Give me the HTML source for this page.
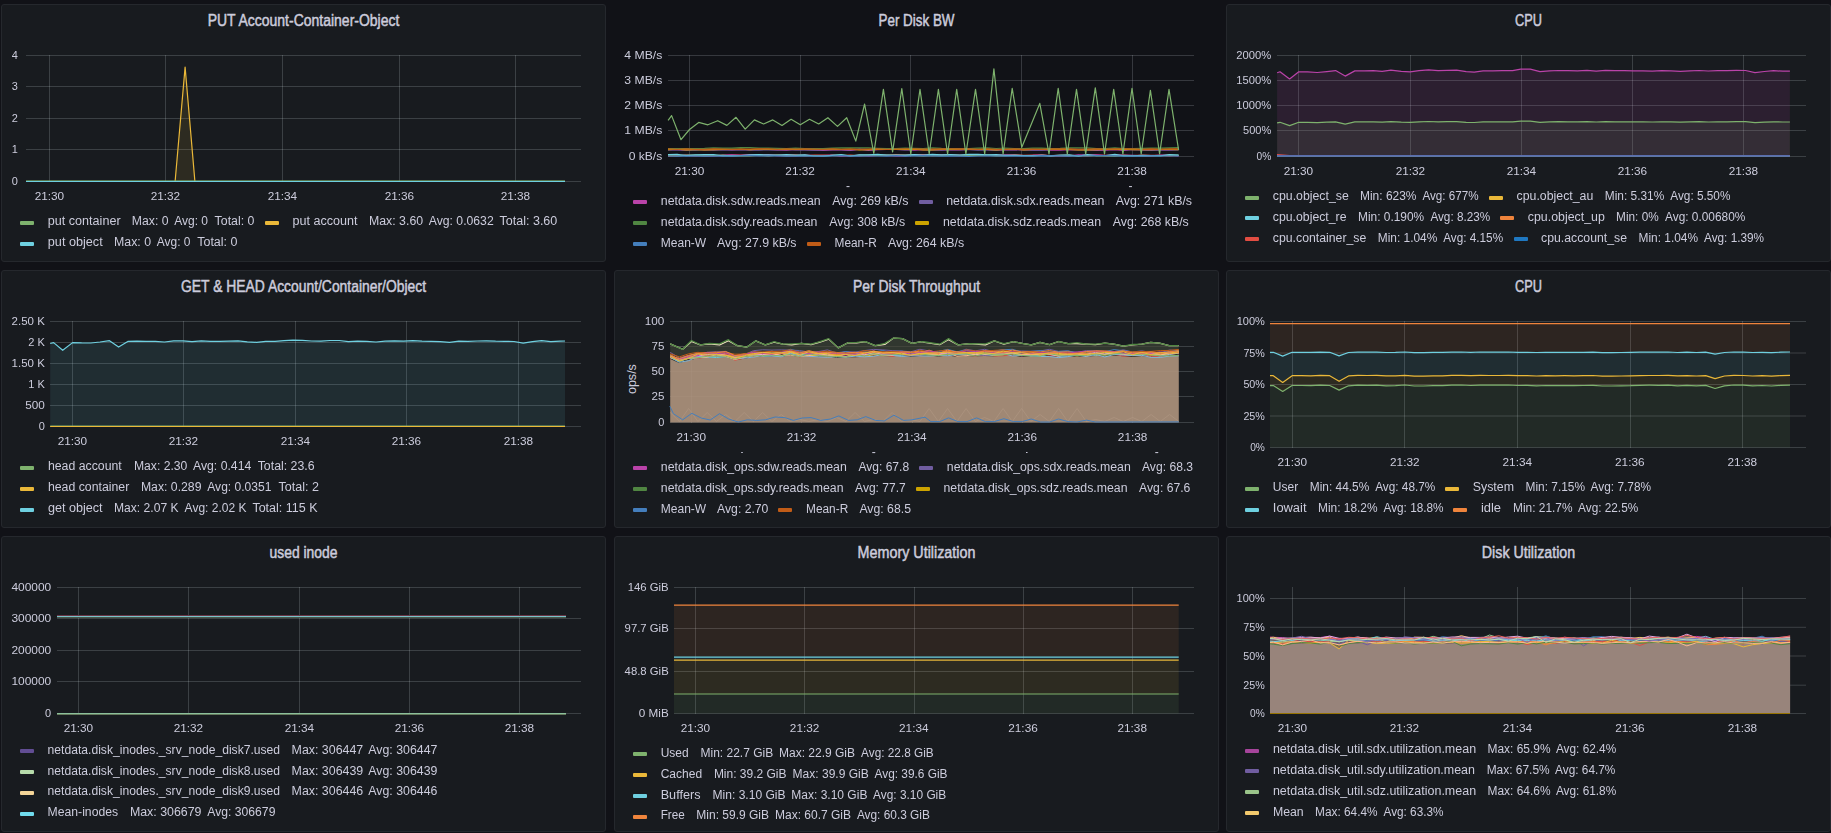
<!DOCTYPE html><html><head><meta charset="utf-8"><style>html,body{margin:0;padding:0;background:#111217;width:1831px;height:833px;overflow:hidden}svg{display:block}text{font-family:"Liberation Sans",sans-serif}</style></head><body>
<svg width="1831" height="833" viewBox="0 0 1831 833">
<rect width="1831" height="833" fill="#111217"/>
<rect x="1.5" y="4.5" width="604" height="257" rx="2.5" fill="#181b1f" stroke="#25282d" stroke-width="1"/>
<g stroke="rgba(240,250,255,0.17)">
<line x1="26.0" y1="55.5" x2="581.0" y2="55.5" stroke-width="1"/>
<line x1="26.0" y1="86.5" x2="581.0" y2="86.5" stroke-width="1"/>
<line x1="26.0" y1="118.5" x2="581.0" y2="118.5" stroke-width="1"/>
<line x1="26.0" y1="149.5" x2="581.0" y2="149.5" stroke-width="1"/>
<line x1="26.0" y1="181.5" x2="581.0" y2="181.5" stroke-width="1"/>
<line x1="49.5" y1="55.0" x2="49.5" y2="182.0" stroke-width="1"/>
<line x1="165.5" y1="55.0" x2="165.5" y2="182.0" stroke-width="1"/>
<line x1="282.5" y1="55.0" x2="282.5" y2="182.0" stroke-width="1"/>
<line x1="399.5" y1="55.0" x2="399.5" y2="182.0" stroke-width="1"/>
<line x1="515.5" y1="55.0" x2="515.5" y2="182.0" stroke-width="1"/>
</g>
<polygon points="175.1,181.5 175.1,181.5 185.1,67.1 194.9,181.5 194.9,181.5" fill="#EAB839" fill-opacity="0.1"/>
<polyline points="175.1,181.5 185.1,67.1 194.9,181.5" fill="none" stroke="#EAB839" stroke-width="1.2" stroke-linejoin="round"/>
<polyline points="26,180.5 565,180.5" stroke="#7EB26D" stroke-width="1" opacity="0.6" fill="none"/>
<polyline points="26.0,181.5 175.1,181.5" fill="none" stroke="#EAB839" stroke-width="1.2" stroke-linejoin="round"/>
<polyline points="194.9,181.5 565.0,181.5" fill="none" stroke="#EAB839" stroke-width="1.2" stroke-linejoin="round"/>
<polyline points="26.0,181.5 565.0,181.5" fill="none" stroke="#6ED0E0" stroke-width="1.2" stroke-linejoin="round"/>
<rect x="20" y="221" width="14" height="4" rx="1" fill="#7EB26D"/>
<rect x="265" y="221" width="14" height="4" rx="1" fill="#EAB839"/>
<rect x="20" y="242" width="14" height="4" rx="1" fill="#6ED0E0"/>
<g stroke="rgba(240,250,255,0.17)">
<line x1="668.0" y1="55.5" x2="1194.0" y2="55.5" stroke-width="1"/>
<line x1="668.0" y1="80.5" x2="1194.0" y2="80.5" stroke-width="1"/>
<line x1="668.0" y1="105.5" x2="1194.0" y2="105.5" stroke-width="1"/>
<line x1="668.0" y1="130.5" x2="1194.0" y2="130.5" stroke-width="1"/>
<line x1="668.0" y1="156.5" x2="1194.0" y2="156.5" stroke-width="1"/>
<line x1="689.5" y1="55.0" x2="689.5" y2="157.0" stroke-width="1"/>
<line x1="800.5" y1="55.0" x2="800.5" y2="157.0" stroke-width="1"/>
<line x1="910.5" y1="55.0" x2="910.5" y2="157.0" stroke-width="1"/>
<line x1="1021.5" y1="55.0" x2="1021.5" y2="157.0" stroke-width="1"/>
<line x1="1132.5" y1="55.0" x2="1132.5" y2="157.0" stroke-width="1"/>
</g>
<polyline points="668.0,149.7 677.1,149.6 686.2,150.1 695.4,149.5 704.5,149.9 713.6,149.8 722.7,149.5 731.8,149.9 740.9,149.4 750.1,149.8 759.2,149.5 768.3,149.5 777.4,149.8 786.5,150.2 795.6,149.5 804.8,149.6 813.9,150.0 823.0,150.3 832.1,150.0 841.2,149.8 850.4,150.4 859.5,149.4 868.6,150.3 877.7,149.7 886.8,149.5 895.9,149.5 905.1,149.7 914.2,150.2 923.3,149.6 932.4,150.0 941.5,150.0 950.7,149.8 959.8,149.9 968.9,149.5 978.0,149.5 987.1,149.6 996.2,150.1 1005.4,149.8 1014.5,149.7 1023.6,150.0 1032.7,149.9 1041.8,149.7 1050.9,150.2 1060.1,150.1 1069.2,149.6 1078.3,150.0 1087.4,149.9 1096.5,150.3 1105.7,150.1 1114.8,149.7 1123.9,150.4 1133.0,149.5 1142.1,149.8 1151.2,150.2 1160.4,149.6 1169.5,149.9 1178.6,149.4" fill="none" stroke="#BA43A9" stroke-width="1.2" stroke-linejoin="round"/>
<polyline points="668.0,149.9 677.1,150.0 686.2,149.8 695.4,150.1 704.5,149.5 713.6,149.9 722.7,149.8 731.8,149.8 740.9,149.7 750.1,150.0 759.2,150.1 768.3,149.7 777.4,149.9 786.5,149.3 795.6,149.9 804.8,149.8 813.9,150.2 823.0,150.0 832.1,149.5 841.2,149.6 850.4,149.9 859.5,149.2 868.6,149.7 877.7,149.4 886.8,149.3 895.9,149.3 905.1,150.0 914.2,149.3 923.3,149.4 932.4,149.6 941.5,150.1 950.7,149.3 959.8,149.6 968.9,149.7 978.0,150.1 987.1,150.0 996.2,150.1 1005.4,149.5 1014.5,149.6 1023.6,149.6 1032.7,150.1 1041.8,150.2 1050.9,149.4 1060.1,149.4 1069.2,149.4 1078.3,149.4 1087.4,149.7 1096.5,149.8 1105.7,149.5 1114.8,149.2 1123.9,149.6 1133.0,149.6 1142.1,149.8 1151.2,150.2 1160.4,149.9 1169.5,149.7 1178.6,149.8" fill="none" stroke="#705DA0" stroke-width="1.2" stroke-linejoin="round"/>
<polyline points="668.0,149.6 677.1,149.1 686.2,149.8 695.4,149.7 704.5,149.8 713.6,149.7 722.7,149.4 731.8,149.4 740.9,149.2 750.1,149.6 759.2,149.1 768.3,149.2 777.4,149.3 786.5,149.2 795.6,149.4 804.8,149.1 813.9,149.1 823.0,149.2 832.1,149.2 841.2,149.4 850.4,149.1 859.5,149.8 868.6,149.6 877.7,149.2 886.8,149.3 895.9,149.4 905.1,149.4 914.2,149.2 923.3,149.8 932.4,149.9 941.5,149.5 950.7,149.5 959.8,149.2 968.9,149.2 978.0,149.4 987.1,149.3 996.2,149.8 1005.4,149.2 1014.5,149.1 1023.6,149.9 1032.7,149.5 1041.8,149.2 1050.9,149.5 1060.1,149.1 1069.2,149.5 1078.3,149.9 1087.4,149.8 1096.5,149.7 1105.7,149.3 1114.8,149.4 1123.9,149.2 1133.0,149.7 1142.1,149.5 1151.2,149.7 1160.4,149.4 1169.5,149.3 1178.6,149.7" fill="none" stroke="#CCA300" stroke-width="1.2" stroke-linejoin="round"/>
<polyline points="668.0,148.7 677.1,148.6 686.2,148.5 695.4,148.5 704.5,148.4 713.6,147.9 722.7,148.2 731.8,148.1 740.9,147.7 750.1,147.7 759.2,148.0 768.3,148.0 777.4,148.4 786.5,148.7 795.6,148.1 804.8,148.6 813.9,148.7 823.0,148.7 832.1,148.1 841.2,147.9 850.4,147.9 859.5,147.9 868.6,147.9 877.7,148.3 886.8,148.6 895.9,148.5 905.1,148.2 914.2,148.4 923.3,148.5 932.4,147.8 941.5,148.4 950.7,148.6 959.8,148.5 968.9,148.5 978.0,148.2 987.1,147.9 996.2,148.5 1005.4,148.0 1014.5,148.5 1023.6,148.7 1032.7,148.1 1041.8,148.1 1050.9,148.6 1060.1,148.4 1069.2,147.9 1078.3,147.8 1087.4,147.9 1096.5,148.6 1105.7,148.5 1114.8,147.8 1123.9,148.5 1133.0,148.7 1142.1,148.4 1151.2,148.1 1160.4,148.2 1169.5,147.8 1178.6,147.7" fill="none" stroke="#508642" stroke-width="1.2" stroke-linejoin="round"/>
<polyline points="668.0,155.9 677.1,155.5 686.2,155.3 695.4,155.8 704.5,155.2 713.6,155.7 722.7,155.7 731.8,155.0 740.9,155.0 750.1,155.1 759.2,155.0 768.3,155.4 777.4,155.0 786.5,155.2 795.6,154.9 804.8,155.8 813.9,155.1 823.0,155.2 832.1,155.4 841.2,155.8 850.4,155.2 859.5,155.8 868.6,155.3 877.7,155.3 886.8,155.3 895.9,154.7 905.1,155.2 914.2,154.9 923.3,154.7 932.4,155.7 941.5,154.9 950.7,155.3 959.8,155.6 968.9,155.4 978.0,155.1 987.1,155.3 996.2,155.4 1005.4,155.6 1014.5,154.8 1023.6,155.4 1032.7,155.0 1041.8,155.0 1050.9,155.6 1060.1,155.3 1069.2,155.4 1078.3,155.6 1087.4,155.8 1096.5,155.2 1105.7,155.4 1114.8,155.3 1123.9,155.3 1133.0,155.5 1142.1,155.2 1151.2,155.3 1160.4,155.3 1169.5,155.8 1178.6,155.5" fill="none" stroke="#E24D42" stroke-width="1.2" stroke-linejoin="round"/>
<polyline points="668.0,155.9 677.1,155.9 686.2,155.1 695.4,155.5 704.5,155.9 713.6,155.8 722.7,155.0 731.8,154.9 740.9,155.3 750.1,154.9 759.2,155.1 768.3,154.9 777.4,155.6 786.5,155.7 795.6,155.9 804.8,155.0 813.9,155.7 823.0,155.6 832.1,155.0 841.2,155.9 850.4,156.0 859.5,155.1 868.6,155.9 877.7,155.3 886.8,155.4 895.9,156.0 905.1,155.8 914.2,155.0 923.3,155.3 932.4,155.4 941.5,155.2 950.7,155.0 959.8,155.2 968.9,155.7 978.0,154.8 987.1,155.5 996.2,155.3 1005.4,154.8 1014.5,155.2 1023.6,155.5 1032.7,155.4 1041.8,154.9 1050.9,156.0 1060.1,155.7 1069.2,156.0 1078.3,154.9 1087.4,155.1 1096.5,154.8 1105.7,155.7 1114.8,155.1 1123.9,155.0 1133.0,155.3 1142.1,155.9 1151.2,155.8 1160.4,155.1 1169.5,155.0 1178.6,155.9" fill="none" stroke="#BA43A9" stroke-width="1.2" stroke-linejoin="round"/>
<polyline points="668.0,155.7 677.1,155.8 686.2,155.2 695.4,155.2 704.5,155.8 713.6,155.5 722.7,155.2 731.8,156.0 740.9,155.7 750.1,155.9 759.2,155.2 768.3,156.0 777.4,155.2 786.5,156.0 795.6,155.6 804.8,155.4 813.9,155.7 823.0,156.0 832.1,155.4 841.2,155.2 850.4,155.6 859.5,155.3 868.6,155.2 877.7,155.3 886.8,155.2 895.9,155.3 905.1,155.4 914.2,155.4 923.3,155.9 932.4,155.4 941.5,155.6 950.7,155.3 959.8,155.4 968.9,155.1 978.0,155.4 987.1,155.1 996.2,155.8 1005.4,155.7 1014.5,155.3 1023.6,155.6 1032.7,156.0 1041.8,155.2 1050.9,155.9 1060.1,155.5 1069.2,155.6 1078.3,155.9 1087.4,155.5 1096.5,155.6 1105.7,155.8 1114.8,156.1 1123.9,155.4 1133.0,155.9 1142.1,155.8 1151.2,155.7 1160.4,155.5 1169.5,155.4 1178.6,155.2" fill="none" stroke="#7EB26D" stroke-width="1.2" stroke-linejoin="round"/>
<polyline points="668.0,154.5 677.1,154.4 686.2,155.6 695.4,154.8 704.5,154.6 713.6,154.5 722.7,155.8 731.8,155.9 740.9,155.5 750.1,154.8 759.2,154.7 768.3,154.8 777.4,155.1 786.5,154.6 795.6,155.1 804.8,154.8 813.9,156.0 823.0,156.1 832.1,155.3 841.2,154.7 850.4,156.0 859.5,154.9 868.6,154.9 877.7,154.3 886.8,155.0 895.9,155.2 905.1,155.2 914.2,154.7 923.3,155.2 932.4,154.3 941.5,154.8 950.7,154.5 959.8,155.0 968.9,154.4 978.0,154.3 987.1,154.8 996.2,154.7 1005.4,155.4 1014.5,155.3 1023.6,155.7 1032.7,155.5 1041.8,155.6 1050.9,155.9 1060.1,155.0 1069.2,154.9 1078.3,156.1 1087.4,154.6 1096.5,155.6 1105.7,155.5 1114.8,154.4 1123.9,155.8 1133.0,155.9 1142.1,155.4 1151.2,155.6 1160.4,155.8 1169.5,154.6 1178.6,155.2" fill="none" stroke="#6ED0E0" stroke-width="1.2" stroke-linejoin="round"/>
<polyline points="668.0,156.0 677.1,156.2 686.2,156.2 695.4,156.2 704.5,156.1 713.6,156.2 722.7,156.1 731.8,156.1 740.9,155.8 750.1,155.7 759.2,155.8 768.3,155.9 777.4,155.8 786.5,156.2 795.6,156.0 804.8,156.1 813.9,156.1 823.0,156.1 832.1,156.0 841.2,155.7 850.4,156.2 859.5,156.1 868.6,156.0 877.7,156.0 886.8,156.1 895.9,155.7 905.1,156.1 914.2,155.9 923.3,155.7 932.4,155.9 941.5,156.1 950.7,155.8 959.8,156.1 968.9,156.3 978.0,156.0 987.1,155.9 996.2,156.0 1005.4,156.1 1014.5,156.2 1023.6,156.1 1032.7,156.1 1041.8,155.7 1050.9,155.8 1060.1,155.9 1069.2,156.1 1078.3,155.9 1087.4,156.0 1096.5,155.7 1105.7,155.7 1114.8,155.9 1123.9,156.1 1133.0,156.1 1142.1,156.1 1151.2,155.9 1160.4,156.0 1169.5,156.0 1178.6,156.0" fill="none" stroke="#447EBC" stroke-width="1.2" stroke-linejoin="round"/>
<polyline points="668.0,148.9 677.1,149.3 686.2,148.9 695.4,149.4 704.5,149.4 713.6,148.8 722.7,149.1 731.8,149.3 740.9,149.4 750.1,149.1 759.2,149.0 768.3,148.9 777.4,149.4 786.5,148.9 795.6,149.1 804.8,148.9 813.9,149.1 823.0,149.4 832.1,148.9 841.2,149.3 850.4,149.1 859.5,149.3 868.6,149.2 877.7,148.9 886.8,149.3 895.9,149.1 905.1,148.8 914.2,148.8 923.3,149.1 932.4,149.1 941.5,149.0 950.7,148.9 959.8,149.0 968.9,149.0 978.0,149.3 987.1,148.8 996.2,149.3 1005.4,149.3 1014.5,148.9 1023.6,149.4 1032.7,149.2 1041.8,149.3 1050.9,149.0 1060.1,149.0 1069.2,149.0 1078.3,149.4 1087.4,149.2 1096.5,149.0 1105.7,149.1 1114.8,149.0 1123.9,148.8 1133.0,148.9 1142.1,149.3 1151.2,149.0 1160.4,149.4 1169.5,148.9 1178.6,149.0" fill="none" stroke="#C15C17" stroke-width="1.3" stroke-linejoin="round"/>
<polyline points="668.1,120.3 671.6,115.6 681.0,139.7 689.5,129.5 698.7,122.4 707.9,124.8 717.7,120.7 726.9,125.4 736.0,117.3 745.2,129.1 754.4,119.9 763.6,124.0 772.8,119.9 782.0,125.4 791.1,119.3 800.3,124.8 809.5,119.3 818.7,124.0 827.9,117.7 837.5,126.4 846.7,117.7 855.8,141.1 864.6,104.0 873.8,153.4 883.4,89.3 892.6,151.9 901.8,88.7 910.8,154.0 920.0,89.3 929.2,154.0 938.4,89.3 947.6,154.0 956.7,89.3 965.9,154.0 975.5,89.3 984.7,154.0 993.9,68.9 1003.1,154.0 1012.2,88.3 1021.8,147.3 1039.8,103.4 1049.0,154.0 1058.2,88.3 1067.3,154.0 1076.5,89.3 1085.7,154.0 1095.3,87.9 1104.5,154.0 1113.7,89.3 1122.9,154.0 1132.0,88.3 1141.2,154.0 1150.4,90.3 1159.6,154.0 1169.0,89.3 1178.6,149.9" fill="none" stroke="#7EB26D" stroke-width="1.2" stroke-linejoin="round"/>
<rect x="633" y="200" width="14" height="4" rx="1" fill="#BA43A9"/>
<rect x="919" y="200" width="14" height="4" rx="1" fill="#705DA0"/>
<rect x="633" y="221" width="14" height="4" rx="1" fill="#508642"/>
<rect x="915" y="221" width="14" height="4" rx="1" fill="#CCA300"/>
<rect x="633" y="242" width="14" height="4" rx="1" fill="#447EBC"/>
<rect x="807" y="242" width="14" height="4" rx="1" fill="#C15C17"/>
<rect x="1226.5" y="4.5" width="604" height="257" rx="2.5" fill="#181b1f" stroke="#25282d" stroke-width="1"/>
<g stroke="rgba(240,250,255,0.17)">
<line x1="1277.0" y1="55.5" x2="1806.0" y2="55.5" stroke-width="1"/>
<line x1="1277.0" y1="80.5" x2="1806.0" y2="80.5" stroke-width="1"/>
<line x1="1277.0" y1="105.5" x2="1806.0" y2="105.5" stroke-width="1"/>
<line x1="1277.0" y1="130.5" x2="1806.0" y2="130.5" stroke-width="1"/>
<line x1="1277.0" y1="156.5" x2="1806.0" y2="156.5" stroke-width="1"/>
<line x1="1298.5" y1="55.0" x2="1298.5" y2="157.0" stroke-width="1"/>
<line x1="1410.5" y1="55.0" x2="1410.5" y2="157.0" stroke-width="1"/>
<line x1="1521.5" y1="55.0" x2="1521.5" y2="157.0" stroke-width="1"/>
<line x1="1632.5" y1="55.0" x2="1632.5" y2="157.0" stroke-width="1"/>
<line x1="1743.5" y1="55.0" x2="1743.5" y2="157.0" stroke-width="1"/>
</g>
<polygon points="1277.1,156.5 1277.1,72.8 1280.0,71.8 1289.6,79.0 1298.8,71.8 1307.6,71.8 1317.2,72.5 1326.8,71.6 1335.6,70.6 1345.2,76.1 1354.8,70.9 1364.4,70.9 1373.2,70.6 1382.1,71.3 1390.9,70.2 1401.3,71.3 1410.1,71.8 1419.0,70.6 1428.6,69.9 1438.2,70.6 1447.0,70.3 1456.6,70.2 1466.2,71.7 1474.3,72.1 1483.1,70.9 1492.7,70.9 1502.3,70.6 1512.6,70.6 1520.7,69.1 1530.3,69.1 1540.0,71.7 1549.4,70.8 1558.8,70.5 1568.0,70.7 1577.5,70.9 1587.0,70.4 1596.2,71.1 1605.5,70.3 1615.0,70.6 1624.3,70.7 1633.6,70.9 1643.0,70.8 1652.3,71.2 1661.6,70.6 1671.0,70.9 1680.4,71.3 1689.7,70.9 1699.0,70.5 1708.3,71.0 1717.6,70.7 1727.0,70.6 1736.3,70.3 1745.6,70.5 1755.0,72.6 1764.3,71.5 1773.6,70.7 1782.9,71.2 1789.9,71.1 1789.9,156.5" fill="#BA43A9" fill-opacity="0.12"/>
<polyline points="1277.1,72.8 1280.0,71.8 1289.6,79.0 1298.8,71.8 1307.6,71.8 1317.2,72.5 1326.8,71.6 1335.6,70.6 1345.2,76.1 1354.8,70.9 1364.4,70.9 1373.2,70.6 1382.1,71.3 1390.9,70.2 1401.3,71.3 1410.1,71.8 1419.0,70.6 1428.6,69.9 1438.2,70.6 1447.0,70.3 1456.6,70.2 1466.2,71.7 1474.3,72.1 1483.1,70.9 1492.7,70.9 1502.3,70.6 1512.6,70.6 1520.7,69.1 1530.3,69.1 1540.0,71.7 1549.4,70.8 1558.8,70.5 1568.0,70.7 1577.5,70.9 1587.0,70.4 1596.2,71.1 1605.5,70.3 1615.0,70.6 1624.3,70.7 1633.6,70.9 1643.0,70.8 1652.3,71.2 1661.6,70.6 1671.0,70.9 1680.4,71.3 1689.7,70.9 1699.0,70.5 1708.3,71.0 1717.6,70.7 1727.0,70.6 1736.3,70.3 1745.6,70.5 1755.0,72.6 1764.3,71.5 1773.6,70.7 1782.9,71.2 1789.9,71.1" fill="none" stroke="#BA43A9" stroke-width="1.2" stroke-linejoin="round"/>
<polygon points="1277.1,156.5 1277.1,122.8 1280.0,122.3 1289.6,125.6 1298.8,122.3 1307.6,122.3 1317.2,122.6 1326.8,122.2 1335.6,121.8 1345.2,124.2 1354.8,121.9 1364.4,121.9 1373.2,121.8 1382.1,122.1 1390.9,121.6 1401.3,122.1 1410.1,122.3 1419.0,121.8 1428.6,121.5 1438.2,121.8 1447.0,121.6 1456.6,121.6 1466.2,122.3 1474.3,122.5 1483.1,121.9 1492.7,121.9 1502.3,121.8 1512.6,121.8 1520.7,121.1 1530.3,121.1 1540.0,122.3 1549.4,121.9 1558.8,121.7 1568.0,121.8 1577.5,121.9 1587.0,121.7 1596.2,122.0 1605.5,121.6 1615.0,121.8 1624.3,121.8 1633.6,121.9 1643.0,121.9 1652.3,122.0 1661.6,121.8 1671.0,121.9 1680.4,122.1 1689.7,121.9 1699.0,121.7 1708.3,122.0 1717.6,121.8 1727.0,121.8 1736.3,121.6 1745.6,121.7 1755.0,122.7 1764.3,122.2 1773.6,121.8 1782.9,122.0 1789.9,122.0 1789.9,156.5" fill="#7EB26D" fill-opacity="0.1"/>
<polyline points="1277.1,122.8 1280.0,122.3 1289.6,125.6 1298.8,122.3 1307.6,122.3 1317.2,122.6 1326.8,122.2 1335.6,121.8 1345.2,124.2 1354.8,121.9 1364.4,121.9 1373.2,121.8 1382.1,122.1 1390.9,121.6 1401.3,122.1 1410.1,122.3 1419.0,121.8 1428.6,121.5 1438.2,121.8 1447.0,121.6 1456.6,121.6 1466.2,122.3 1474.3,122.5 1483.1,121.9 1492.7,121.9 1502.3,121.8 1512.6,121.8 1520.7,121.1 1530.3,121.1 1540.0,122.3 1549.4,121.9 1558.8,121.7 1568.0,121.8 1577.5,121.9 1587.0,121.7 1596.2,122.0 1605.5,121.6 1615.0,121.8 1624.3,121.8 1633.6,121.9 1643.0,121.9 1652.3,122.0 1661.6,121.8 1671.0,121.9 1680.4,122.1 1689.7,121.9 1699.0,121.7 1708.3,122.0 1717.6,121.8 1727.0,121.8 1736.3,121.6 1745.6,121.7 1755.0,122.7 1764.3,122.2 1773.6,121.8 1782.9,122.0 1789.9,122.0" fill="none" stroke="#7EB26D" stroke-width="1.2" stroke-linejoin="round"/>
<polyline points="1277.0,154.7 1280.0,154.9 1289.6,155.7 1298.8,155.9 1789.9,155.9" fill="none" stroke="#E24D42" stroke-width="1.2" stroke-linejoin="round"/>
<polyline points="1277.0,155.9 1789.9,155.9" fill="none" stroke="#EF843C" stroke-width="1.2" stroke-linejoin="round"/>
<polyline points="1277.0,155.7 1789.9,155.7" fill="none" stroke="#705DA0" stroke-width="1.2" stroke-linejoin="round"/>
<polyline points="1277.0,156.1 1789.9,156.1" fill="none" stroke="#447EBC" stroke-width="1.2" stroke-linejoin="round"/>
<rect x="1245" y="196" width="14" height="4" rx="1" fill="#7EB26D"/>
<rect x="1489" y="196" width="14" height="4" rx="1" fill="#EAB839"/>
<rect x="1245" y="216" width="14" height="4" rx="1" fill="#6ED0E0"/>
<rect x="1500" y="216" width="14" height="4" rx="1" fill="#EF843C"/>
<rect x="1245" y="237" width="14" height="4" rx="1" fill="#E24D42"/>
<rect x="1514" y="237" width="14" height="4" rx="1" fill="#1F78C1"/>
<rect x="1.5" y="270.5" width="604" height="257" rx="2.5" fill="#181b1f" stroke="#25282d" stroke-width="1"/>
<g stroke="rgba(240,250,255,0.17)">
<line x1="50.0" y1="321.5" x2="581.0" y2="321.5" stroke-width="1"/>
<line x1="50.0" y1="342.5" x2="581.0" y2="342.5" stroke-width="1"/>
<line x1="50.0" y1="363.5" x2="581.0" y2="363.5" stroke-width="1"/>
<line x1="50.0" y1="384.5" x2="581.0" y2="384.5" stroke-width="1"/>
<line x1="50.0" y1="405.5" x2="581.0" y2="405.5" stroke-width="1"/>
<line x1="50.0" y1="426.5" x2="581.0" y2="426.5" stroke-width="1"/>
<line x1="72.5" y1="321.0" x2="72.5" y2="427.0" stroke-width="1"/>
<line x1="183.5" y1="321.0" x2="183.5" y2="427.0" stroke-width="1"/>
<line x1="295.5" y1="321.0" x2="295.5" y2="427.0" stroke-width="1"/>
<line x1="406.5" y1="321.0" x2="406.5" y2="427.0" stroke-width="1"/>
<line x1="518.5" y1="321.0" x2="518.5" y2="427.0" stroke-width="1"/>
</g>
<polygon points="50.2,426.5 50.2,343.5 53.6,342.6 62.7,350.3 72.6,342.6 81.6,342.9 90.8,343.0 100.0,342.0 109.5,340.7 118.6,347.1 127.8,341.4 137.0,341.2 146.0,341.4 155.3,341.3 164.5,342.0 173.7,340.8 183.0,340.9 192.0,341.6 201.3,340.9 210.5,341.3 219.7,341.3 229.0,341.1 238.0,340.9 247.3,341.9 256.5,342.3 265.7,341.4 275.0,341.3 284.0,340.6 293.0,340.2 302.4,340.4 311.6,341.0 320.8,341.1 330.0,340.5 339.2,340.5 348.4,341.6 357.6,341.1 366.8,341.4 376.0,342.0 385.2,341.1 394.4,340.9 403.6,341.1 412.8,340.6 422.0,341.1 431.2,341.3 440.4,341.7 449.6,342.4 458.8,341.2 468.0,341.4 477.2,341.0 486.4,340.8 495.6,341.2 504.8,341.3 514.0,341.5 523.2,343.2 532.4,341.6 541.6,340.7 550.8,341.6 560.0,341.2 565.0,341.0 565.0,426.5" fill="#6ED0E0" fill-opacity="0.1"/>
<polyline points="50.2,343.5 53.6,342.6 62.7,350.3 72.6,342.6 81.6,342.9 90.8,343.0 100.0,342.0 109.5,340.7 118.6,347.1 127.8,341.4 137.0,341.2 146.0,341.4 155.3,341.3 164.5,342.0 173.7,340.8 183.0,340.9 192.0,341.6 201.3,340.9 210.5,341.3 219.7,341.3 229.0,341.1 238.0,340.9 247.3,341.9 256.5,342.3 265.7,341.4 275.0,341.3 284.0,340.6 293.0,340.2 302.4,340.4 311.6,341.0 320.8,341.1 330.0,340.5 339.2,340.5 348.4,341.6 357.6,341.1 366.8,341.4 376.0,342.0 385.2,341.1 394.4,340.9 403.6,341.1 412.8,340.6 422.0,341.1 431.2,341.3 440.4,341.7 449.6,342.4 458.8,341.2 468.0,341.4 477.2,341.0 486.4,340.8 495.6,341.2 504.8,341.3 514.0,341.5 523.2,343.2 532.4,341.6 541.6,340.7 550.8,341.6 560.0,341.2 565.0,341.0" fill="none" stroke="#6ED0E0" stroke-width="1.2" stroke-linejoin="round"/>
<polyline points="50.2,426.2 565.0,426.2" fill="none" stroke="#7EB26D" stroke-width="1.2" stroke-linejoin="round"/>
<polyline points="50.2,426.5 565.0,426.5" fill="none" stroke="#EAB839" stroke-width="1.2" stroke-linejoin="round"/>
<rect x="20" y="466" width="14" height="4" rx="1" fill="#7EB26D"/>
<rect x="20" y="487" width="14" height="4" rx="1" fill="#EAB839"/>
<rect x="20" y="508" width="14" height="4" rx="1" fill="#6ED0E0"/>
<rect x="614.5" y="270.5" width="604" height="257" rx="2.5" fill="#181b1f" stroke="#25282d" stroke-width="1"/>
<g stroke="rgba(240,250,255,0.17)">
<line x1="670.0" y1="321.5" x2="1194.0" y2="321.5" stroke-width="1"/>
<line x1="670.0" y1="346.5" x2="1194.0" y2="346.5" stroke-width="1"/>
<line x1="670.0" y1="371.5" x2="1194.0" y2="371.5" stroke-width="1"/>
<line x1="670.0" y1="396.5" x2="1194.0" y2="396.5" stroke-width="1"/>
<line x1="670.0" y1="422.5" x2="1194.0" y2="422.5" stroke-width="1"/>
<line x1="691.5" y1="321.0" x2="691.5" y2="423.0" stroke-width="1"/>
<line x1="801.5" y1="321.0" x2="801.5" y2="423.0" stroke-width="1"/>
<line x1="912.5" y1="321.0" x2="912.5" y2="423.0" stroke-width="1"/>
<line x1="1022.5" y1="321.0" x2="1022.5" y2="423.0" stroke-width="1"/>
<line x1="1132.5" y1="321.0" x2="1132.5" y2="423.0" stroke-width="1"/>
</g>
<text x="0" y="0" font-size="12" fill="#ccccdc" text-anchor="middle" transform="translate(636,379.1) rotate(-90)" textLength="30" lengthAdjust="spacingAndGlyphs">ops/s</text>
<polygon points="670.2,343.9 682.7,349.3 691.5,340.5 700.4,344.9 709.2,343.4 719.6,343.9 728.4,339.7 737.3,345.6 746.9,347.1 755.7,340.9 765.3,344.9 774.1,341.7 783.0,344.2 791.8,343.9 801.4,343.4 811.0,344.2 819.9,341.7 828.7,338.6 838.3,347.9 847.9,342.7 856.7,342.4 865.6,341.7 875.2,345.6 884.8,343.4 893.6,338.0 902.5,338.6 912.0,343.4 921.6,341.7 925.0,342.0 939.7,344.2 948.6,338.6 958.2,344.9 969.2,343.7 985.5,343.9 994.3,340.9 1003.9,343.7 1013.5,341.7 1022.3,343.4 1031.2,344.9 1040.0,342.4 1049.6,344.6 1058.5,341.5 1068.1,343.7 1076.9,342.7 1086.5,344.2 1095.4,344.2 1104.9,343.1 1113.8,344.2 1123.4,346.1 1132.2,344.5 1141.8,344.2 1150.7,342.4 1159.5,343.1 1169.1,345.6 1178.7,345.6 1178.8,355.6 1169.6,355.9 1160.3,356.8 1151.1,357.1 1141.8,356.1 1132.6,357.0 1123.3,356.2 1114.1,355.5 1104.8,356.3 1095.6,356.0 1086.3,356.4 1077.1,356.5 1067.8,356.8 1058.6,357.0 1049.3,355.9 1040.1,356.8 1030.8,355.9 1021.6,356.9 1012.3,355.5 1003.1,355.7 993.9,356.2 984.6,355.9 975.4,356.2 966.1,356.0 956.9,356.7 947.6,355.4 938.4,356.6 929.1,355.5 919.9,355.9 910.6,356.9 901.4,355.6 892.1,356.3 882.9,356.1 873.6,355.7 864.4,356.7 855.1,357.2 845.9,357.3 836.7,358.0 827.4,356.2 818.2,356.4 808.9,356.2 799.7,356.9 790.4,355.5 781.2,356.6 771.9,356.6 762.7,356.3 753.4,357.0 744.2,358.8 734.9,360.0 725.7,356.9 716.4,357.6 707.2,357.4 697.9,358.2 688.7,360.3 679.4,362.9 670.2,359.1" fill="#31372f" fill-opacity="1"/>
<polygon points="670.2,422.5 670.2,359.1 679.4,362.9 688.7,360.3 697.9,358.2 707.2,357.4 716.4,357.6 725.7,356.9 734.9,360.0 744.2,358.8 753.4,357.0 762.7,356.3 771.9,356.6 781.2,356.6 790.4,355.5 799.7,356.9 808.9,356.2 818.2,356.4 827.4,356.2 836.7,358.0 845.9,357.3 855.1,357.2 864.4,356.7 873.6,355.7 882.9,356.1 892.1,356.3 901.4,355.6 910.6,356.9 919.9,355.9 929.1,355.5 938.4,356.6 947.6,355.4 956.9,356.7 966.1,356.0 975.4,356.2 984.6,355.9 993.9,356.2 1003.1,355.7 1012.3,355.5 1021.6,356.9 1030.8,355.9 1040.1,356.8 1049.3,355.9 1058.6,357.0 1067.8,356.8 1077.1,356.5 1086.3,356.4 1095.6,356.0 1104.8,356.3 1114.1,355.5 1123.3,356.2 1132.6,357.0 1141.8,356.1 1151.1,357.1 1160.3,356.8 1169.6,355.9 1178.8,355.6 1178.8,422.5" fill="#a08874"/>
<line x1="670.2" y1="346.5" x2="1178.8" y2="346.5" stroke="#b8a492" stroke-width="1" opacity="0.12"/>
<line x1="670.2" y1="371.5" x2="1178.8" y2="371.5" stroke="#b8a492" stroke-width="1" opacity="0.12"/>
<line x1="670.2" y1="396.5" x2="1178.8" y2="396.5" stroke="#b8a492" stroke-width="1" opacity="0.12"/>
<line x1="691.5" y1="359.5" x2="691.5" y2="422.5" stroke="#b09a88" stroke-width="1" opacity="0.2"/>
<line x1="801.5" y1="359.5" x2="801.5" y2="422.5" stroke="#b09a88" stroke-width="1" opacity="0.2"/>
<line x1="912.5" y1="359.5" x2="912.5" y2="422.5" stroke="#b09a88" stroke-width="1" opacity="0.2"/>
<line x1="1022.5" y1="359.5" x2="1022.5" y2="422.5" stroke="#b09a88" stroke-width="1" opacity="0.2"/>
<line x1="1132.5" y1="359.5" x2="1132.5" y2="422.5" stroke="#b09a88" stroke-width="1" opacity="0.2"/>
<polyline points="670.2,412.5 679.4,421.5 688.7,408.5 697.9,421.5 707.2,412.5 716.4,421.5 725.7,414.5 734.9,421.5 744.2,412.5 753.4,421.5 762.7,412.5 771.9,421.5 781.2,414.5 790.4,421.5 799.7,419.5 808.9,421.5 818.2,419.5 827.4,421.5 836.7,417.5 845.9,421.5 855.1,412.5 864.4,421.5 873.6,419.5 882.9,421.5 892.1,412.5 901.4,421.5 910.6,419.5 919.9,421.5 929.1,408.5 938.4,421.5 947.6,408.5 956.9,421.5 966.1,408.5 975.4,421.5 984.6,417.5 993.9,421.5 1003.1,408.5 1012.3,421.5 1021.6,408.5 1030.8,421.5 1040.1,414.5 1049.3,421.5 1058.6,408.5 1067.8,421.5 1077.1,408.5 1086.3,421.5 1095.6,419.5 1104.8,421.5 1114.1,417.5 1123.3,421.5 1132.6,417.5 1141.8,421.5 1151.1,414.5 1160.3,421.5 1169.6,414.5 1178.8,421.5" fill="none" stroke="#b09884" stroke-width="1" opacity="0.6"/>
<polyline points="670.2,357.1 679.4,360.1 688.7,356.9 697.9,354.7 707.2,356.1 716.4,356.2 725.7,354.3 734.9,358.4 744.2,357.1 753.4,356.0 762.7,355.5 771.9,354.1 781.2,355.9 790.4,354.7 799.7,354.9 808.9,355.1 818.2,354.1 827.4,353.6 836.7,355.0 845.9,356.1 855.1,354.0 864.4,353.2 873.6,354.4 882.9,354.7 892.1,354.0 901.4,354.4 910.6,353.3 919.9,353.0 929.1,352.7 938.4,354.1 947.6,352.2 956.9,353.2 966.1,353.3 975.4,355.1 984.6,355.1 993.9,354.7 1003.1,353.4 1012.3,352.5 1021.6,356.0 1030.8,353.7 1040.1,355.3 1049.3,352.3 1058.6,354.0 1067.8,355.6 1077.1,355.1 1086.3,355.3 1095.6,354.1 1104.8,353.8 1114.1,353.5 1123.3,355.0 1132.6,354.2 1141.8,354.0 1151.1,354.2 1160.3,355.4 1169.6,352.1 1178.8,353.9" fill="none" stroke="#BA43A9" stroke-width="1" stroke-linejoin="round"/>
<polyline points="670.2,352.4 679.4,357.9 688.7,355.5 697.9,354.0 707.2,352.4 716.4,351.6 725.7,351.4 734.9,356.1 744.2,354.7 753.4,350.7 762.7,349.8 771.9,350.1 781.2,349.9 790.4,350.1 799.7,350.5 808.9,352.0 818.2,351.6 827.4,349.9 836.7,352.8 845.9,351.5 855.1,352.0 864.4,350.6 873.6,349.4 882.9,349.9 892.1,350.6 901.4,350.9 910.6,351.8 919.9,349.3 929.1,350.9 938.4,352.4 947.6,351.0 956.9,352.3 966.1,349.2 975.4,350.8 984.6,349.3 993.9,351.7 1003.1,349.5 1012.3,350.9 1021.6,350.9 1030.8,351.2 1040.1,351.0 1049.3,349.3 1058.6,351.4 1067.8,351.0 1077.1,352.4 1086.3,350.5 1095.6,350.7 1104.8,351.1 1114.1,351.6 1123.3,349.8 1132.6,352.0 1141.8,350.8 1151.1,352.5 1160.3,352.9 1169.6,350.0 1178.8,350.9" fill="none" stroke="#705DA0" stroke-width="1" stroke-linejoin="round"/>
<polyline points="670.2,356.1 679.4,358.5 688.7,358.1 697.9,356.5 707.2,353.8 716.4,354.0 725.7,355.3 734.9,355.7 744.2,354.4 753.4,352.6 762.7,354.1 771.9,354.2 781.2,353.3 790.4,352.8 799.7,352.3 808.9,353.5 818.2,353.1 827.4,353.2 836.7,354.5 845.9,353.8 855.1,353.3 864.4,352.3 873.6,352.4 882.9,352.2 892.1,353.8 901.4,353.4 910.6,354.4 919.9,352.6 929.1,351.6 938.4,353.1 947.6,352.2 956.9,354.0 966.1,354.2 975.4,351.8 984.6,352.7 993.9,353.0 1003.1,353.2 1012.3,353.6 1021.6,354.6 1030.8,353.2 1040.1,354.5 1049.3,353.3 1058.6,355.0 1067.8,354.3 1077.1,353.9 1086.3,352.5 1095.6,354.1 1104.8,352.8 1114.1,352.7 1123.3,354.1 1132.6,355.2 1141.8,354.4 1151.1,352.4 1160.3,353.1 1169.6,352.2 1178.8,352.1" fill="none" stroke="#CCA300" stroke-width="1" stroke-linejoin="round"/>
<polyline points="670.2,358.0 679.4,360.4 688.7,358.5 697.9,358.3 707.2,356.9 716.4,356.3 725.7,354.5 734.9,360.2 744.2,358.1 753.4,354.9 762.7,354.6 771.9,355.8 781.2,355.9 790.4,353.6 799.7,357.0 808.9,354.4 818.2,354.4 827.4,356.1 836.7,355.7 845.9,356.6 855.1,355.1 864.4,355.8 873.6,353.8 882.9,354.5 892.1,356.4 901.4,354.3 910.6,355.5 919.9,355.0 929.1,353.6 938.4,354.4 947.6,353.8 956.9,354.8 966.1,353.8 975.4,356.3 984.6,353.3 993.9,355.9 1003.1,355.8 1012.3,354.9 1021.6,354.2 1030.8,354.7 1040.1,354.2 1049.3,355.0 1058.6,356.4 1067.8,354.8 1077.1,353.8 1086.3,355.3 1095.6,353.5 1104.8,354.5 1114.1,354.1 1123.3,356.2 1132.6,355.4 1141.8,353.8 1151.1,356.7 1160.3,356.6 1169.6,354.7 1178.8,353.0" fill="none" stroke="#E24D42" stroke-width="1" stroke-linejoin="round"/>
<polyline points="670.2,357.3 679.4,361.6 688.7,358.0 697.9,357.7 707.2,357.0 716.4,357.5 725.7,356.6 734.9,357.2 744.2,357.6 753.4,354.3 762.7,356.1 771.9,355.9 781.2,356.0 790.4,353.1 799.7,354.1 808.9,355.7 818.2,355.2 827.4,355.2 836.7,356.4 845.9,356.7 855.1,355.3 864.4,354.6 873.6,353.8 882.9,354.1 892.1,355.2 901.4,355.3 910.6,354.2 919.9,353.2 929.1,354.1 938.4,355.7 947.6,353.0 956.9,354.6 966.1,353.2 975.4,353.4 984.6,354.4 993.9,355.3 1003.1,354.7 1012.3,353.0 1021.6,354.2 1030.8,355.8 1040.1,355.5 1049.3,354.2 1058.6,356.2 1067.8,356.1 1077.1,355.1 1086.3,353.7 1095.6,355.5 1104.8,354.0 1114.1,352.7 1123.3,354.3 1132.6,355.6 1141.8,355.0 1151.1,354.6 1160.3,356.0 1169.6,354.4 1178.8,353.1" fill="none" stroke="#6ED0E0" stroke-width="1" stroke-linejoin="round"/>
<polyline points="670.2,355.2 679.4,359.4 688.7,356.1 697.9,352.6 707.2,353.4 716.4,354.1 725.7,352.3 734.9,356.5 744.2,355.4 753.4,351.9 762.7,352.9 771.9,353.2 781.2,352.8 790.4,349.3 799.7,351.7 808.9,351.8 818.2,351.9 827.4,352.3 836.7,353.7 845.9,351.5 855.1,353.8 864.4,352.1 873.6,352.1 882.9,350.5 892.1,353.0 901.4,351.0 910.6,353.0 919.9,351.9 929.1,351.9 938.4,351.4 947.6,349.4 956.9,351.7 966.1,350.3 975.4,351.5 984.6,352.1 993.9,351.0 1003.1,349.8 1012.3,349.3 1021.6,351.9 1030.8,351.4 1040.1,350.6 1049.3,351.7 1058.6,351.4 1067.8,350.9 1077.1,353.0 1086.3,351.7 1095.6,352.4 1104.8,351.6 1114.1,349.6 1123.3,350.7 1132.6,352.0 1141.8,351.8 1151.1,353.1 1160.3,352.8 1169.6,351.5 1178.8,350.1" fill="none" stroke="#447EBC" stroke-width="1" stroke-linejoin="round"/>
<polyline points="670.2,356.0 679.4,360.2 688.7,357.0 697.9,355.7 707.2,354.6 716.4,353.6 725.7,355.2 734.9,357.6 744.2,357.0 753.4,355.1 762.7,354.4 771.9,355.4 781.2,353.6 790.4,352.5 799.7,352.7 808.9,354.0 818.2,354.0 827.4,353.8 836.7,356.8 845.9,353.7 855.1,353.8 864.4,354.8 873.6,354.0 882.9,353.4 892.1,352.3 901.4,352.5 910.6,355.2 919.9,353.3 929.1,352.8 938.4,353.6 947.6,353.1 956.9,354.4 966.1,353.9 975.4,354.6 984.6,354.0 993.9,353.1 1003.1,352.3 1012.3,353.7 1021.6,355.1 1030.8,354.5 1040.1,353.3 1049.3,354.3 1058.6,355.6 1067.8,352.9 1077.1,353.3 1086.3,354.1 1095.6,352.3 1104.8,354.6 1114.1,352.1 1123.3,354.1 1132.6,353.7 1141.8,352.6 1151.1,353.5 1160.3,354.2 1169.6,353.8 1178.8,352.1" fill="none" stroke="#E5A8E2" stroke-width="1" stroke-linejoin="round"/>
<polyline points="670.2,354.6 679.4,359.4 688.7,356.0 697.9,353.3 707.2,352.4 716.4,352.4 725.7,353.6 734.9,355.8 744.2,353.7 753.4,354.2 762.7,352.8 771.9,351.2 781.2,353.4 790.4,351.9 799.7,352.8 808.9,352.2 818.2,353.8 827.4,351.9 836.7,354.4 845.9,353.7 855.1,352.9 864.4,352.3 873.6,352.6 882.9,352.6 892.1,352.2 901.4,351.7 910.6,352.1 919.9,352.8 929.1,350.2 938.4,353.1 947.6,351.3 956.9,351.9 966.1,352.3 975.4,352.5 984.6,350.7 993.9,352.2 1003.1,350.8 1012.3,352.5 1021.6,352.4 1030.8,351.5 1040.1,352.0 1049.3,350.6 1058.6,352.2 1067.8,351.8 1077.1,352.9 1086.3,353.5 1095.6,351.2 1104.8,351.2 1114.1,351.6 1123.3,351.1 1132.6,352.8 1141.8,352.9 1151.1,352.2 1160.3,353.5 1169.6,352.0 1178.8,350.4" fill="none" stroke="#EF843C" stroke-width="1" stroke-linejoin="round"/>
<polyline points="670.2,357.6 679.4,360.0 688.7,357.7 697.9,356.7 707.2,356.6 716.4,356.0 725.7,355.7 734.9,356.9 744.2,356.5 753.4,354.8 762.7,355.8 771.9,354.5 781.2,355.8 790.4,352.4 799.7,355.2 808.9,355.6 818.2,355.5 827.4,354.8 836.7,355.3 845.9,356.8 855.1,354.3 864.4,356.4 873.6,354.8 882.9,355.0 892.1,354.7 901.4,352.9 910.6,354.7 919.9,354.7 929.1,354.3 938.4,354.5 947.6,354.6 956.9,353.7 966.1,353.6 975.4,353.2 984.6,353.6 993.9,355.3 1003.1,354.8 1012.3,352.7 1021.6,354.6 1030.8,353.0 1040.1,355.6 1049.3,354.0 1058.6,354.5 1067.8,354.7 1077.1,355.9 1086.3,354.4 1095.6,354.8 1104.8,354.9 1114.1,353.7 1123.3,354.7 1132.6,354.9 1141.8,353.5 1151.1,355.3 1160.3,354.5 1169.6,353.6 1178.8,352.9" fill="none" stroke="#EAB839" stroke-width="1" stroke-linejoin="round"/>
<polyline points="670.2,353.8 679.4,356.9 688.7,353.8 697.9,352.3 707.2,353.4 716.4,352.1 725.7,352.3 734.9,354.2 744.2,354.1 753.4,351.8 762.7,352.0 771.9,351.6 781.2,351.2 790.4,349.8 799.7,352.1 808.9,352.1 818.2,351.9 827.4,351.1 836.7,352.4 845.9,353.4 855.1,353.2 864.4,350.6 873.6,351.2 882.9,351.8 892.1,351.7 901.4,351.9 910.6,353.0 919.9,350.1 929.1,352.0 938.4,351.0 947.6,350.0 956.9,353.1 966.1,349.9 975.4,350.8 984.6,351.2 993.9,350.4 1003.1,349.9 1012.3,351.3 1021.6,352.1 1030.8,351.6 1040.1,352.6 1049.3,352.0 1058.6,353.2 1067.8,352.7 1077.1,352.9 1086.3,351.3 1095.6,351.5 1104.8,351.2 1114.1,351.8 1123.3,351.6 1132.6,351.7 1141.8,351.5 1151.1,351.4 1160.3,350.6 1169.6,350.4 1178.8,349.4" fill="none" stroke="#C15C17" stroke-width="1" stroke-linejoin="round"/>
<polyline points="670.2,357.3 679.4,362.3 688.7,360.6 697.9,356.3 707.2,357.3 716.4,356.0 725.7,356.4 734.9,358.9 744.2,358.1 753.4,357.1 762.7,355.5 771.9,355.8 781.2,356.8 790.4,353.8 799.7,355.9 808.9,356.3 818.2,356.8 827.4,357.2 836.7,356.7 845.9,357.1 855.1,356.2 864.4,356.8 873.6,356.2 882.9,354.5 892.1,355.3 901.4,356.4 910.6,355.9 919.9,355.8 929.1,356.0 938.4,355.4 947.6,355.7 956.9,354.7 966.1,355.0 975.4,354.7 984.6,354.9 993.9,354.8 1003.1,353.8 1012.3,355.9 1021.6,355.4 1030.8,355.6 1040.1,356.5 1049.3,356.5 1058.6,357.6 1067.8,356.7 1077.1,355.0 1086.3,356.6 1095.6,354.3 1104.8,357.0 1114.1,354.4 1123.3,355.0 1132.6,355.6 1141.8,355.3 1151.1,357.4 1160.3,357.4 1169.6,356.1 1178.8,355.8" fill="none" stroke="#82B5D8" stroke-width="1" stroke-linejoin="round"/>
<polyline points="670.2,356.8 679.4,360.6 688.7,358.4 697.9,357.6 707.2,357.1 716.4,354.7 725.7,356.6 734.9,359.6 744.2,356.9 753.4,355.9 762.7,355.4 771.9,353.9 781.2,355.3 790.4,355.2 799.7,356.3 808.9,355.7 818.2,353.4 827.4,355.2 836.7,356.2 845.9,356.8 855.1,354.5 864.4,355.2 873.6,352.9 882.9,355.3 892.1,355.2 901.4,352.5 910.6,354.6 919.9,353.1 929.1,354.2 938.4,355.2 947.6,352.4 956.9,356.3 966.1,355.7 975.4,354.3 984.6,354.4 993.9,354.0 1003.1,354.3 1012.3,353.5 1021.6,355.0 1030.8,354.9 1040.1,354.1 1049.3,353.6 1058.6,356.1 1067.8,354.3 1077.1,353.5 1086.3,355.9 1095.6,353.2 1104.8,354.3 1114.1,353.2 1123.3,353.8 1132.6,354.8 1141.8,354.5 1151.1,354.2 1160.3,355.2 1169.6,352.8 1178.8,352.6" fill="none" stroke="#F9BA8F" stroke-width="1" stroke-linejoin="round"/>
<polyline points="670.2,356.8 679.4,360.9 688.7,358.2 697.9,357.7 707.2,356.3 716.4,356.1 725.7,356.2 734.9,359.1 744.2,356.7 753.4,355.9 762.7,355.5 771.9,355.2 781.2,355.9 790.4,354.4 799.7,356.6 808.9,353.9 818.2,355.4 827.4,356.2 836.7,356.5 845.9,357.0 855.1,354.5 864.4,355.9 873.6,353.5 882.9,355.3 892.1,354.5 901.4,354.2 910.6,354.6 919.9,353.7 929.1,355.1 938.4,355.5 947.6,354.3 956.9,354.0 966.1,353.9 975.4,356.1 984.6,353.5 993.9,354.8 1003.1,354.8 1012.3,354.0 1021.6,355.5 1030.8,355.8 1040.1,356.1 1049.3,353.6 1058.6,355.3 1067.8,355.1 1077.1,355.5 1086.3,355.4 1095.6,353.8 1104.8,355.3 1114.1,353.8 1123.3,353.3 1132.6,354.8 1141.8,354.2 1151.1,354.6 1160.3,355.8 1169.6,355.8 1178.8,355.4" fill="none" stroke="#7EB26D" stroke-width="1" stroke-linejoin="round"/>
<polyline points="670.2,356.5 679.4,359.2 688.7,356.9 697.9,355.7 707.2,352.4 716.4,353.6 725.7,352.9 734.9,355.9 744.2,354.9 753.4,352.1 762.7,353.2 771.9,354.3 781.2,352.2 790.4,350.9 799.7,352.7 808.9,353.4 818.2,351.9 827.4,353.4 836.7,353.3 845.9,353.9 855.1,354.3 864.4,353.6 873.6,350.8 882.9,353.8 892.1,353.7 901.4,351.9 910.6,354.3 919.9,352.6 929.1,350.9 938.4,352.6 947.6,352.7 956.9,353.0 966.1,351.0 975.4,351.5 984.6,351.3 993.9,352.8 1003.1,352.5 1012.3,351.7 1021.6,352.9 1030.8,353.6 1040.1,352.7 1049.3,352.8 1058.6,352.5 1067.8,353.2 1077.1,351.9 1086.3,351.6 1095.6,351.8 1104.8,351.5 1114.1,351.5 1123.3,353.0 1132.6,353.5 1141.8,353.3 1151.1,353.3 1160.3,351.9 1169.6,352.9 1178.8,351.6" fill="none" stroke="#BA43A9" stroke-width="1" stroke-linejoin="round"/>
<polyline points="670.2,356.2 679.4,358.7 688.7,355.3 697.9,353.5 707.2,353.1 716.4,352.8 725.7,351.5 734.9,355.5 744.2,355.0 753.4,353.7 762.7,352.8 771.9,353.5 781.2,353.3 790.4,351.0 799.7,353.0 808.9,350.6 818.2,353.0 827.4,352.6 836.7,353.0 845.9,352.9 855.1,352.3 864.4,353.4 873.6,351.2 882.9,352.7 892.1,353.3 901.4,352.2 910.6,352.3 919.9,351.2 929.1,352.6 938.4,353.5 947.6,350.2 956.9,352.0 966.1,352.6 975.4,352.7 984.6,351.0 993.9,351.7 1003.1,352.8 1012.3,350.0 1021.6,351.9 1030.8,352.1 1040.1,353.8 1049.3,353.0 1058.6,352.7 1067.8,353.4 1077.1,353.6 1086.3,351.6 1095.6,350.9 1104.8,351.3 1114.1,352.1 1123.3,350.9 1132.6,352.9 1141.8,353.1 1151.1,351.9 1160.3,352.9 1169.6,351.7 1178.8,352.7" fill="none" stroke="#EF843C" stroke-width="1" stroke-linejoin="round"/>
<polyline points="670.2,356.0 679.4,361.1 688.7,358.0 697.9,354.1 707.2,355.2 716.4,354.3 725.7,355.3 734.9,358.4 744.2,355.7 753.4,353.7 762.7,352.4 771.9,352.9 781.2,352.7 790.4,351.5 799.7,354.5 808.9,351.8 818.2,353.6 827.4,353.5 836.7,355.6 845.9,354.4 855.1,355.5 864.4,353.0 873.6,351.4 882.9,353.3 892.1,352.5 901.4,354.0 910.6,355.1 919.9,353.4 929.1,353.5 938.4,352.7 947.6,352.3 956.9,353.3 966.1,352.5 975.4,352.7 984.6,352.8 993.9,353.5 1003.1,351.2 1012.3,352.6 1021.6,352.7 1030.8,354.2 1040.1,353.9 1049.3,353.1 1058.6,353.4 1067.8,354.4 1077.1,354.0 1086.3,354.5 1095.6,353.2 1104.8,352.5 1114.1,352.8 1123.3,351.8 1132.6,354.6 1141.8,352.4 1151.1,354.6 1160.3,352.6 1169.6,353.1 1178.8,351.5" fill="none" stroke="#EAB839" stroke-width="1" stroke-linejoin="round"/>
<polyline points="670.2,343.9 682.7,349.3 691.5,341.5 700.4,344.9 709.2,343.9 719.6,344.9 728.4,340.7 737.3,345.6 746.9,347.1 755.7,340.9 765.3,344.9 774.1,342.2 783.0,344.2 791.8,344.9 801.4,343.4 811.0,344.7 819.9,342.2 828.7,339.1 838.3,347.9 847.9,342.7 856.7,342.9 865.6,341.7 875.2,345.6 884.8,344.4 893.6,338.0 902.5,338.6 912.0,343.4 921.6,341.7 925.0,342.5 939.7,344.7 948.6,339.6 958.2,344.9 969.2,343.7 985.5,344.9 994.3,340.9 1003.9,344.2 1013.5,341.7 1022.3,343.4 1031.2,344.9 1040.0,342.4 1049.6,344.6 1058.5,341.5 1068.1,343.7 1076.9,343.7 1086.5,344.2 1095.4,344.7 1104.9,343.1 1113.8,344.2 1123.4,346.1 1132.2,345.0 1141.8,344.2 1150.7,342.4 1159.5,343.1 1169.1,345.6 1178.7,345.6" fill="none" stroke="#FCEACA" stroke-width="1.2" stroke-linejoin="round"/>
<polyline points="670.2,343.9 682.7,349.3 691.5,340.5 700.4,344.9 709.2,343.4 719.6,343.9 728.4,339.7 737.3,345.6 746.9,347.1 755.7,340.9 765.3,344.9 774.1,341.7 783.0,344.2 791.8,343.9 801.4,343.4 811.0,344.2 819.9,341.7 828.7,338.6 838.3,347.9 847.9,342.7 856.7,342.4 865.6,341.7 875.2,345.6 884.8,343.4 893.6,338.0 902.5,338.6 912.0,343.4 921.6,341.7 925.0,342.0 939.7,344.2 948.6,338.6 958.2,344.9 969.2,343.7 985.5,343.9 994.3,340.9 1003.9,343.7 1013.5,341.7 1022.3,343.4 1031.2,344.9 1040.0,342.4 1049.6,344.6 1058.5,341.5 1068.1,343.7 1076.9,342.7 1086.5,344.2 1095.4,344.2 1104.9,343.1 1113.8,344.2 1123.4,346.1 1132.2,344.5 1141.8,344.2 1150.7,342.4 1159.5,343.1 1169.1,345.6 1178.7,345.6" fill="none" stroke="#508642" stroke-width="1.3" stroke-linejoin="round"/>
<polyline points="669.8,406.2 673.4,413.7 682.7,419.8 691.8,413.3 701.1,418.0 710.2,420.0 719.5,413.7 728.6,419.0 738.3,422.0 747.2,419.8 756.6,420.4 765.5,419.8 775.0,417.0 784.8,417.6 793.4,420.4 802.2,418.0 811.0,417.6 820.8,420.4 830.6,419.0 838.8,415.9 848.5,420.4 857.2,419.8 865.8,416.6 875.5,420.4 884.2,421.0 893.9,415.2 903.6,420.4 912.0,419.8 925.0,417.2 930.9,421.6 939.7,421.6 948.6,417.9 958.0,421.6 967.0,421.6 976.6,417.9 985.5,421.6 994.3,421.6 1003.9,418.7 1013.5,421.6 1022.3,421.6 1031.2,419.0 1040.6,422.0 1049.6,422.0 1058.5,419.0 1068.1,421.6 1076.9,422.0 1086.5,420.1 1095.4,422.0 1178.8,421.9" fill="none" stroke="#447EBC" stroke-width="1" stroke-linejoin="round"/>
<rect x="633" y="466" width="14" height="4" rx="1" fill="#BA43A9"/>
<rect x="919" y="466" width="14" height="4" rx="1" fill="#705DA0"/>
<rect x="633" y="487" width="14" height="4" rx="1" fill="#508642"/>
<rect x="916" y="487" width="14" height="4" rx="1" fill="#CCA300"/>
<rect x="633" y="508" width="14" height="4" rx="1" fill="#447EBC"/>
<rect x="778" y="508" width="14" height="4" rx="1" fill="#C15C17"/>
<rect x="1226.5" y="270.5" width="604" height="257" rx="2.5" fill="#181b1f" stroke="#25282d" stroke-width="1"/>
<g stroke="rgba(240,250,255,0.17)">
<line x1="1270.0" y1="321.5" x2="1806.0" y2="321.5" stroke-width="1"/>
<line x1="1270.0" y1="353.0" x2="1806.0" y2="353.0" stroke-width="1"/>
<line x1="1270.0" y1="384.5" x2="1806.0" y2="384.5" stroke-width="1"/>
<line x1="1270.0" y1="416.0" x2="1806.0" y2="416.0" stroke-width="1"/>
<line x1="1270.0" y1="447.5" x2="1806.0" y2="447.5" stroke-width="1"/>
<line x1="1292.5" y1="321.0" x2="1292.5" y2="448.0" stroke-width="1"/>
<line x1="1404.5" y1="321.0" x2="1404.5" y2="448.0" stroke-width="1"/>
<line x1="1517.5" y1="321.0" x2="1517.5" y2="448.0" stroke-width="1"/>
<line x1="1630.5" y1="321.0" x2="1630.5" y2="448.0" stroke-width="1"/>
<line x1="1742.5" y1="321.0" x2="1742.5" y2="448.0" stroke-width="1"/>
</g>
<clipPath id="c1"><rect x="1270" y="315" width="520" height="133"/></clipPath><g clip-path="url(#c1)">
<polygon points="1263.9,385.5 1273.3,385.6 1282.7,391.4 1292.1,385.5 1301.5,385.5 1310.9,385.6 1320.3,385.2 1329.7,385.5 1339.1,390.1 1348.5,385.8 1357.9,385.1 1367.3,385.3 1376.7,385.1 1386.1,385.8 1395.5,385.7 1404.9,385.0 1414.3,386.0 1423.7,386.0 1433.1,385.7 1442.5,385.6 1451.9,385.2 1461.3,385.0 1470.7,385.5 1480.1,385.1 1489.5,385.2 1498.9,385.2 1508.3,385.0 1517.7,385.5 1527.1,385.4 1536.5,385.8 1545.9,385.5 1555.3,385.6 1564.7,385.5 1574.1,385.7 1583.5,385.5 1592.9,385.3 1602.3,386.0 1611.7,386.0 1621.1,385.8 1630.5,385.7 1639.9,385.3 1649.3,385.2 1658.7,385.3 1668.1,385.1 1677.5,385.8 1686.9,385.4 1696.3,385.8 1705.7,385.4 1715.1,388.5 1724.5,385.8 1733.9,385.0 1743.3,385.2 1752.7,385.9 1762.1,385.5 1771.5,386.0 1780.9,385.4 1790.3,385.1 1790.3,447.5 1263.9,447.5" fill="#7EB26D" fill-opacity="0.1"/>
<polygon points="1263.9,375.7 1273.3,375.7 1282.7,382.5 1292.1,375.7 1301.5,375.7 1310.9,375.8 1320.3,375.4 1329.7,375.7 1339.1,381.3 1348.5,375.9 1357.9,375.4 1367.3,375.5 1376.7,375.4 1386.1,375.9 1395.5,375.9 1404.9,375.3 1414.3,376.1 1423.7,376.1 1433.1,375.8 1442.5,375.8 1451.9,375.4 1461.3,375.3 1470.7,375.7 1480.1,375.3 1489.5,375.5 1498.9,375.5 1508.3,375.3 1517.7,375.7 1527.1,375.7 1536.5,376.0 1545.9,375.7 1555.3,375.8 1564.7,375.7 1574.1,375.8 1583.5,375.7 1592.9,375.5 1602.3,376.1 1611.7,376.1 1621.1,376.0 1630.5,375.9 1639.9,375.6 1649.3,375.5 1658.7,375.5 1668.1,375.4 1677.5,375.9 1686.9,375.6 1696.3,376.0 1705.7,375.6 1715.1,378.6 1724.5,376.0 1733.9,375.3 1743.3,375.5 1752.7,376.0 1762.1,375.7 1771.5,376.1 1780.9,375.6 1790.3,375.4 1790.3,385.1 1780.9,385.4 1771.5,386.0 1762.1,385.5 1752.7,385.9 1743.3,385.2 1733.9,385.0 1724.5,385.8 1715.1,388.5 1705.7,385.4 1696.3,385.8 1686.9,385.4 1677.5,385.8 1668.1,385.1 1658.7,385.3 1649.3,385.2 1639.9,385.3 1630.5,385.7 1621.1,385.8 1611.7,386.0 1602.3,386.0 1592.9,385.3 1583.5,385.5 1574.1,385.7 1564.7,385.5 1555.3,385.6 1545.9,385.5 1536.5,385.8 1527.1,385.4 1517.7,385.5 1508.3,385.0 1498.9,385.2 1489.5,385.2 1480.1,385.1 1470.7,385.5 1461.3,385.0 1451.9,385.2 1442.5,385.6 1433.1,385.7 1423.7,386.0 1414.3,386.0 1404.9,385.0 1395.5,385.7 1386.1,385.8 1376.7,385.1 1367.3,385.3 1357.9,385.1 1348.5,385.8 1339.1,390.1 1329.7,385.5 1320.3,385.2 1310.9,385.6 1301.5,385.5 1292.1,385.5 1282.7,391.4 1273.3,385.6 1263.9,385.5" fill="#EAB839" fill-opacity="0.1"/>
<polygon points="1263.9,352.3 1273.3,352.3 1282.7,356.1 1292.1,352.3 1301.5,352.3 1310.9,352.4 1320.3,352.1 1329.7,352.3 1339.1,355.9 1348.5,352.5 1357.9,352.1 1367.3,352.2 1376.7,352.1 1386.1,352.5 1395.5,352.4 1404.9,352.0 1414.3,352.6 1423.7,352.6 1433.1,352.4 1442.5,352.4 1451.9,352.1 1461.3,352.0 1470.7,352.3 1480.1,352.0 1489.5,352.1 1498.9,352.1 1508.3,352.0 1517.7,352.3 1527.1,352.3 1536.5,352.5 1545.9,352.3 1555.3,352.4 1564.7,352.3 1574.1,352.4 1583.5,352.3 1592.9,352.2 1602.3,352.6 1611.7,352.6 1621.1,352.5 1630.5,352.4 1639.9,352.2 1649.3,352.1 1658.7,352.2 1668.1,352.0 1677.5,352.5 1686.9,352.2 1696.3,352.5 1705.7,352.2 1715.1,354.1 1724.5,352.5 1733.9,352.0 1743.3,352.1 1752.7,352.5 1762.1,352.3 1771.5,352.6 1780.9,352.2 1790.3,352.0 1790.3,375.4 1780.9,375.6 1771.5,376.1 1762.1,375.7 1752.7,376.0 1743.3,375.5 1733.9,375.3 1724.5,376.0 1715.1,378.6 1705.7,375.6 1696.3,376.0 1686.9,375.6 1677.5,375.9 1668.1,375.4 1658.7,375.5 1649.3,375.5 1639.9,375.6 1630.5,375.9 1621.1,376.0 1611.7,376.1 1602.3,376.1 1592.9,375.5 1583.5,375.7 1574.1,375.8 1564.7,375.7 1555.3,375.8 1545.9,375.7 1536.5,376.0 1527.1,375.7 1517.7,375.7 1508.3,375.3 1498.9,375.5 1489.5,375.5 1480.1,375.3 1470.7,375.7 1461.3,375.3 1451.9,375.4 1442.5,375.8 1433.1,375.8 1423.7,376.1 1414.3,376.1 1404.9,375.3 1395.5,375.9 1386.1,375.9 1376.7,375.4 1367.3,375.5 1357.9,375.4 1348.5,375.9 1339.1,381.3 1329.7,375.7 1320.3,375.4 1310.9,375.8 1301.5,375.7 1292.1,375.7 1282.7,382.5 1273.3,375.7 1263.9,375.7" fill="#6ED0E0" fill-opacity="0.1"/>
<polygon points="1263.9,323.7 1273.3,323.7 1282.7,323.7 1292.1,323.7 1301.5,323.7 1310.9,323.7 1320.3,323.7 1329.7,323.7 1339.1,323.7 1348.5,323.7 1357.9,323.7 1367.3,323.7 1376.7,323.7 1386.1,323.7 1395.5,323.7 1404.9,323.7 1414.3,323.7 1423.7,323.7 1433.1,323.7 1442.5,323.7 1451.9,323.7 1461.3,323.7 1470.7,323.7 1480.1,323.7 1489.5,323.7 1498.9,323.7 1508.3,323.7 1517.7,323.7 1527.1,323.7 1536.5,323.7 1545.9,323.7 1555.3,323.7 1564.7,323.7 1574.1,323.7 1583.5,323.7 1592.9,323.7 1602.3,323.7 1611.7,323.7 1621.1,323.7 1630.5,323.7 1639.9,323.7 1649.3,323.7 1658.7,323.7 1668.1,323.7 1677.5,323.7 1686.9,323.7 1696.3,323.7 1705.7,323.7 1715.1,323.7 1724.5,323.7 1733.9,323.7 1743.3,323.7 1752.7,323.7 1762.1,323.7 1771.5,323.7 1780.9,323.7 1790.3,323.7 1790.3,352.0 1780.9,352.2 1771.5,352.6 1762.1,352.3 1752.7,352.5 1743.3,352.1 1733.9,352.0 1724.5,352.5 1715.1,354.1 1705.7,352.2 1696.3,352.5 1686.9,352.2 1677.5,352.5 1668.1,352.0 1658.7,352.2 1649.3,352.1 1639.9,352.2 1630.5,352.4 1621.1,352.5 1611.7,352.6 1602.3,352.6 1592.9,352.2 1583.5,352.3 1574.1,352.4 1564.7,352.3 1555.3,352.4 1545.9,352.3 1536.5,352.5 1527.1,352.3 1517.7,352.3 1508.3,352.0 1498.9,352.1 1489.5,352.1 1480.1,352.0 1470.7,352.3 1461.3,352.0 1451.9,352.1 1442.5,352.4 1433.1,352.4 1423.7,352.6 1414.3,352.6 1404.9,352.0 1395.5,352.4 1386.1,352.5 1376.7,352.1 1367.3,352.2 1357.9,352.1 1348.5,352.5 1339.1,355.9 1329.7,352.3 1320.3,352.1 1310.9,352.4 1301.5,352.3 1292.1,352.3 1282.7,356.1 1273.3,352.3 1263.9,352.3" fill="#EF843C" fill-opacity="0.1"/>
<polyline points="1263.9,385.5 1273.3,385.6 1282.7,391.4 1292.1,385.5 1301.5,385.5 1310.9,385.6 1320.3,385.2 1329.7,385.5 1339.1,390.1 1348.5,385.8 1357.9,385.1 1367.3,385.3 1376.7,385.1 1386.1,385.8 1395.5,385.7 1404.9,385.0 1414.3,386.0 1423.7,386.0 1433.1,385.7 1442.5,385.6 1451.9,385.2 1461.3,385.0 1470.7,385.5 1480.1,385.1 1489.5,385.2 1498.9,385.2 1508.3,385.0 1517.7,385.5 1527.1,385.4 1536.5,385.8 1545.9,385.5 1555.3,385.6 1564.7,385.5 1574.1,385.7 1583.5,385.5 1592.9,385.3 1602.3,386.0 1611.7,386.0 1621.1,385.8 1630.5,385.7 1639.9,385.3 1649.3,385.2 1658.7,385.3 1668.1,385.1 1677.5,385.8 1686.9,385.4 1696.3,385.8 1705.7,385.4 1715.1,388.5 1724.5,385.8 1733.9,385.0 1743.3,385.2 1752.7,385.9 1762.1,385.5 1771.5,386.0 1780.9,385.4 1790.3,385.1" fill="none" stroke="#7EB26D" stroke-width="1.2" stroke-linejoin="round"/>
<polyline points="1263.9,375.7 1273.3,375.7 1282.7,382.5 1292.1,375.7 1301.5,375.7 1310.9,375.8 1320.3,375.4 1329.7,375.7 1339.1,381.3 1348.5,375.9 1357.9,375.4 1367.3,375.5 1376.7,375.4 1386.1,375.9 1395.5,375.9 1404.9,375.3 1414.3,376.1 1423.7,376.1 1433.1,375.8 1442.5,375.8 1451.9,375.4 1461.3,375.3 1470.7,375.7 1480.1,375.3 1489.5,375.5 1498.9,375.5 1508.3,375.3 1517.7,375.7 1527.1,375.7 1536.5,376.0 1545.9,375.7 1555.3,375.8 1564.7,375.7 1574.1,375.8 1583.5,375.7 1592.9,375.5 1602.3,376.1 1611.7,376.1 1621.1,376.0 1630.5,375.9 1639.9,375.6 1649.3,375.5 1658.7,375.5 1668.1,375.4 1677.5,375.9 1686.9,375.6 1696.3,376.0 1705.7,375.6 1715.1,378.6 1724.5,376.0 1733.9,375.3 1743.3,375.5 1752.7,376.0 1762.1,375.7 1771.5,376.1 1780.9,375.6 1790.3,375.4" fill="none" stroke="#EAB839" stroke-width="1.2" stroke-linejoin="round"/>
<polyline points="1263.9,352.3 1273.3,352.3 1282.7,356.1 1292.1,352.3 1301.5,352.3 1310.9,352.4 1320.3,352.1 1329.7,352.3 1339.1,355.9 1348.5,352.5 1357.9,352.1 1367.3,352.2 1376.7,352.1 1386.1,352.5 1395.5,352.4 1404.9,352.0 1414.3,352.6 1423.7,352.6 1433.1,352.4 1442.5,352.4 1451.9,352.1 1461.3,352.0 1470.7,352.3 1480.1,352.0 1489.5,352.1 1498.9,352.1 1508.3,352.0 1517.7,352.3 1527.1,352.3 1536.5,352.5 1545.9,352.3 1555.3,352.4 1564.7,352.3 1574.1,352.4 1583.5,352.3 1592.9,352.2 1602.3,352.6 1611.7,352.6 1621.1,352.5 1630.5,352.4 1639.9,352.2 1649.3,352.1 1658.7,352.2 1668.1,352.0 1677.5,352.5 1686.9,352.2 1696.3,352.5 1705.7,352.2 1715.1,354.1 1724.5,352.5 1733.9,352.0 1743.3,352.1 1752.7,352.5 1762.1,352.3 1771.5,352.6 1780.9,352.2 1790.3,352.0" fill="none" stroke="#6ED0E0" stroke-width="1.2" stroke-linejoin="round"/>
<polyline points="1263.9,323.7 1273.3,323.7 1282.7,323.7 1292.1,323.7 1301.5,323.7 1310.9,323.7 1320.3,323.7 1329.7,323.7 1339.1,323.7 1348.5,323.7 1357.9,323.7 1367.3,323.7 1376.7,323.7 1386.1,323.7 1395.5,323.7 1404.9,323.7 1414.3,323.7 1423.7,323.7 1433.1,323.7 1442.5,323.7 1451.9,323.7 1461.3,323.7 1470.7,323.7 1480.1,323.7 1489.5,323.7 1498.9,323.7 1508.3,323.7 1517.7,323.7 1527.1,323.7 1536.5,323.7 1545.9,323.7 1555.3,323.7 1564.7,323.7 1574.1,323.7 1583.5,323.7 1592.9,323.7 1602.3,323.7 1611.7,323.7 1621.1,323.7 1630.5,323.7 1639.9,323.7 1649.3,323.7 1658.7,323.7 1668.1,323.7 1677.5,323.7 1686.9,323.7 1696.3,323.7 1705.7,323.7 1715.1,323.7 1724.5,323.7 1733.9,323.7 1743.3,323.7 1752.7,323.7 1762.1,323.7 1771.5,323.7 1780.9,323.7 1790.3,323.7" fill="none" stroke="#EF843C" stroke-width="1.2" stroke-linejoin="round"/>
</g>
<rect x="1245" y="487" width="14" height="4" rx="1" fill="#7EB26D"/>
<rect x="1445" y="487" width="14" height="4" rx="1" fill="#EAB839"/>
<rect x="1245" y="508" width="14" height="4" rx="1" fill="#6ED0E0"/>
<rect x="1453" y="508" width="14" height="4" rx="1" fill="#EF843C"/>
<rect x="1.5" y="536.5" width="604" height="295" rx="2.5" fill="#181b1f" stroke="#25282d" stroke-width="1"/>
<g stroke="rgba(240,250,255,0.17)">
<line x1="57.0" y1="587.5" x2="581.0" y2="587.5" stroke-width="1"/>
<line x1="57.0" y1="618.5" x2="581.0" y2="618.5" stroke-width="1"/>
<line x1="57.0" y1="650.5" x2="581.0" y2="650.5" stroke-width="1"/>
<line x1="57.0" y1="681.5" x2="581.0" y2="681.5" stroke-width="1"/>
<line x1="57.0" y1="713.5" x2="581.0" y2="713.5" stroke-width="1"/>
<line x1="78.5" y1="587.0" x2="78.5" y2="714.0" stroke-width="1"/>
<line x1="188.5" y1="587.0" x2="188.5" y2="714.0" stroke-width="1"/>
<line x1="299.5" y1="587.0" x2="299.5" y2="714.0" stroke-width="1"/>
<line x1="409.5" y1="587.0" x2="409.5" y2="714.0" stroke-width="1"/>
<line x1="519.5" y1="587.0" x2="519.5" y2="714.0" stroke-width="1"/>
</g>
<polyline points="57.0,617.5 566.0,617.5" fill="none" stroke="rgb(70,86,70)" stroke-width="1" stroke-linejoin="round"/>
<polyline points="57.0,615.5 566.0,615.5" fill="none" stroke="rgb(104,52,68)" stroke-width="1" stroke-linejoin="round"/>
<polyline points="57.0,616.5 566.0,616.5" fill="none" stroke="rgb(122,192,202)" stroke-width="1" stroke-linejoin="round"/>
<polyline points="57.0,714.5 566.0,714.5" fill="none" stroke="rgb(100,122,92)" stroke-width="1" stroke-linejoin="round"/>
<polyline points="57.0,713.5 566.0,713.5" fill="none" stroke="rgb(140,192,156)" stroke-width="1" stroke-linejoin="round"/>
<rect x="20" y="749" width="14" height="4" rx="1" fill="#614D93"/>
<rect x="20" y="770" width="14" height="4" rx="1" fill="#B7DBAB"/>
<rect x="20" y="791" width="14" height="4" rx="1" fill="#F4D598"/>
<rect x="20" y="812" width="14" height="4" rx="1" fill="#70DBED"/>
<rect x="614.5" y="536.5" width="604" height="295" rx="2.5" fill="#181b1f" stroke="#25282d" stroke-width="1"/>
<g stroke="rgba(240,250,255,0.17)">
<line x1="674.0" y1="587.5" x2="1194.0" y2="587.5" stroke-width="1"/>
<line x1="674.0" y1="628.5" x2="1194.0" y2="628.5" stroke-width="1"/>
<line x1="674.0" y1="671.5" x2="1194.0" y2="671.5" stroke-width="1"/>
<line x1="674.0" y1="713.5" x2="1194.0" y2="713.5" stroke-width="1"/>
<line x1="695.5" y1="587.0" x2="695.5" y2="714.0" stroke-width="1"/>
<line x1="804.5" y1="587.0" x2="804.5" y2="714.0" stroke-width="1"/>
<line x1="914.5" y1="587.0" x2="914.5" y2="714.0" stroke-width="1"/>
<line x1="1023.5" y1="587.0" x2="1023.5" y2="714.0" stroke-width="1"/>
<line x1="1132.5" y1="587.0" x2="1132.5" y2="714.0" stroke-width="1"/>
</g>
<polygon points="674.0,694.0 1178.7,694.0 1178.7,713.5 674.0,713.5" fill="#7EB26D" fill-opacity="0.1"/>
<polygon points="674.0,660.2 1178.7,660.2 1178.7,694.0 674.0,694.0" fill="#EAB839" fill-opacity="0.1"/>
<polygon points="674.0,657.2 1178.7,657.2 1178.7,660.2 674.0,660.2" fill="#6ED0E0" fill-opacity="0.1"/>
<polygon points="674.0,605.1 1178.7,605.1 1178.7,657.2 674.0,657.2" fill="#EF843C" fill-opacity="0.1"/>
<polyline points="674.0,694.0 1178.7,694.0" fill="none" stroke="#7EB26D" stroke-width="1.2" stroke-linejoin="round"/>
<polyline points="674.0,660.2 1178.7,660.2" fill="none" stroke="#EAB839" stroke-width="1.2" stroke-linejoin="round"/>
<polyline points="674.0,657.2 1178.7,657.2" fill="none" stroke="#6ED0E0" stroke-width="1.2" stroke-linejoin="round"/>
<polyline points="674.0,605.1 1178.7,605.1" fill="none" stroke="#EF843C" stroke-width="1.2" stroke-linejoin="round"/>
<rect x="633" y="752" width="14" height="4" rx="1" fill="#7EB26D"/>
<rect x="633" y="773" width="14" height="4" rx="1" fill="#EAB839"/>
<rect x="633" y="794" width="14" height="4" rx="1" fill="#6ED0E0"/>
<rect x="633" y="815" width="14" height="4" rx="1" fill="#EF843C"/>
<rect x="1226.5" y="536.5" width="604" height="295" rx="2.5" fill="#181b1f" stroke="#25282d" stroke-width="1"/>
<g stroke="rgba(240,250,255,0.17)">
<line x1="1270.0" y1="598.5" x2="1806.0" y2="598.5" stroke-width="1"/>
<line x1="1270.0" y1="627.3" x2="1806.0" y2="627.3" stroke-width="1"/>
<line x1="1270.0" y1="656.0" x2="1806.0" y2="656.0" stroke-width="1"/>
<line x1="1270.0" y1="685.2" x2="1806.0" y2="685.2" stroke-width="1"/>
<line x1="1270.0" y1="713.5" x2="1806.0" y2="713.5" stroke-width="1"/>
<line x1="1292.5" y1="587.0" x2="1292.5" y2="714.0" stroke-width="1"/>
<line x1="1404.5" y1="587.0" x2="1404.5" y2="714.0" stroke-width="1"/>
<line x1="1517.5" y1="587.0" x2="1517.5" y2="714.0" stroke-width="1"/>
<line x1="1630.5" y1="587.0" x2="1630.5" y2="714.0" stroke-width="1"/>
<line x1="1742.5" y1="587.0" x2="1742.5" y2="714.0" stroke-width="1"/>
</g>
<clipPath id="c2"><rect x="1270" y="590" width="520.3" height="124"/></clipPath><g clip-path="url(#c2)">
<polygon points="1263.9,713.5 1263.9,636.7 1273.3,638.2 1282.7,638.6 1292.1,639.0 1301.5,637.3 1310.9,638.1 1320.3,638.5 1329.7,637.1 1339.1,639.3 1348.5,638.3 1357.9,637.9 1367.3,638.4 1376.7,637.7 1386.1,638.1 1395.5,638.9 1404.9,637.9 1414.3,638.2 1423.7,638.1 1433.1,637.3 1442.5,637.7 1451.9,638.0 1461.3,636.7 1470.7,638.4 1480.1,638.4 1489.5,636.0 1498.9,636.8 1508.3,638.0 1517.7,637.2 1527.1,638.8 1536.5,637.5 1545.9,636.8 1555.3,639.0 1564.7,638.2 1574.1,638.9 1583.5,638.6 1592.9,637.8 1602.3,637.7 1611.7,637.4 1621.1,638.2 1630.5,638.7 1639.9,638.4 1649.3,637.1 1658.7,638.0 1668.1,638.1 1677.5,638.3 1686.9,635.2 1696.3,637.4 1705.7,637.3 1715.1,639.2 1724.5,638.3 1733.9,638.6 1743.3,638.8 1752.7,638.7 1762.1,637.2 1771.5,638.7 1780.9,638.3 1790.3,636.8 1790.3,713.5" fill="#6f625d"/>
<polygon points="1263.9,713.5 1263.9,643.2 1273.3,643.4 1282.7,645.5 1292.1,643.7 1301.5,643.4 1310.9,643.7 1320.3,642.2 1329.7,642.9 1339.1,647.7 1348.5,643.2 1357.9,643.6 1367.3,642.4 1376.7,643.0 1386.1,642.6 1395.5,643.1 1404.9,643.1 1414.3,642.2 1423.7,642.5 1433.1,642.6 1442.5,643.7 1451.9,643.4 1461.3,642.5 1470.7,643.5 1480.1,642.4 1489.5,643.2 1498.9,642.4 1508.3,642.2 1517.7,643.6 1527.1,642.5 1536.5,642.5 1545.9,643.8 1555.3,643.6 1564.7,642.7 1574.1,643.7 1583.5,643.1 1592.9,643.3 1602.3,642.5 1611.7,643.7 1621.1,643.3 1630.5,643.7 1639.9,643.6 1649.3,642.7 1658.7,642.8 1668.1,642.5 1677.5,642.4 1686.9,642.3 1696.3,642.7 1705.7,643.2 1715.1,642.2 1724.5,643.3 1733.9,642.7 1743.3,642.7 1752.7,643.5 1762.1,643.0 1771.5,642.7 1780.9,643.0 1790.3,643.3 1790.3,713.5" fill="#98847b"/>
<polyline points="1263.9,636.7 1273.3,637.3 1282.7,637.6 1292.1,639.3 1301.5,639.3 1310.9,638.0 1320.3,637.5 1329.7,636.2 1339.1,639.4 1348.5,638.0 1357.9,637.9 1367.3,637.4 1376.7,643.4 1386.1,638.4 1395.5,638.5 1404.9,638.3 1414.3,639.1 1423.7,639.3 1433.1,637.4 1442.5,639.1 1451.9,639.4 1461.3,638.2 1470.7,638.3 1480.1,637.5 1489.5,639.3 1498.9,638.0 1508.3,638.9 1517.7,638.9 1527.1,638.7 1536.5,638.8 1545.9,638.9 1555.3,639.3 1564.7,637.2 1574.1,638.7 1583.5,638.6 1592.9,638.6 1602.3,638.0 1611.7,638.7 1621.1,638.4 1630.5,639.1 1639.9,638.7 1649.3,637.6 1658.7,638.7 1668.1,638.9 1677.5,637.3 1686.9,638.6 1696.3,636.4 1705.7,637.3 1715.1,640.5 1724.5,638.1 1733.9,640.5 1743.3,637.8 1752.7,642.3 1762.1,637.4 1771.5,638.5 1780.9,638.1 1790.3,638.0" fill="none" stroke="#BA43A9" stroke-width="1" stroke-linejoin="round"/>
<polyline points="1263.9,642.1 1273.3,643.0 1282.7,643.0 1292.1,641.4 1301.5,641.0 1310.9,642.1 1320.3,642.0 1329.7,642.2 1339.1,644.3 1348.5,640.6 1357.9,641.4 1367.3,644.8 1376.7,640.6 1386.1,640.5 1395.5,642.2 1404.9,641.0 1414.3,641.6 1423.7,640.7 1433.1,640.7 1442.5,640.8 1451.9,640.1 1461.3,642.0 1470.7,640.0 1480.1,641.3 1489.5,641.1 1498.9,640.9 1508.3,640.7 1517.7,641.8 1527.1,640.6 1536.5,640.3 1545.9,641.1 1555.3,641.3 1564.7,640.5 1574.1,638.9 1583.5,645.9 1592.9,640.5 1602.3,641.6 1611.7,642.0 1621.1,640.9 1630.5,640.1 1639.9,637.8 1649.3,641.9 1658.7,640.7 1668.1,642.1 1677.5,641.5 1686.9,641.1 1696.3,641.4 1705.7,640.6 1715.1,640.3 1724.5,641.6 1733.9,641.4 1743.3,640.2 1752.7,640.5 1762.1,644.2 1771.5,640.1 1780.9,641.5 1790.3,642.1" fill="none" stroke="#705DA0" stroke-width="1" stroke-linejoin="round"/>
<polyline points="1263.9,639.0 1273.3,638.4 1282.7,639.2 1292.1,639.1 1301.5,639.5 1310.9,638.9 1320.3,639.9 1329.7,641.7 1339.1,641.0 1348.5,638.7 1357.9,638.0 1367.3,639.6 1376.7,638.3 1386.1,642.0 1395.5,638.5 1404.9,639.2 1414.3,637.9 1423.7,639.2 1433.1,636.3 1442.5,638.6 1451.9,638.4 1461.3,639.3 1470.7,638.2 1480.1,639.1 1489.5,635.0 1498.9,637.8 1508.3,638.8 1517.7,637.8 1527.1,637.9 1536.5,636.7 1545.9,636.8 1555.3,638.1 1564.7,638.8 1574.1,637.9 1583.5,639.0 1592.9,637.7 1602.3,638.9 1611.7,639.3 1621.1,638.7 1630.5,637.9 1639.9,639.4 1649.3,638.0 1658.7,637.9 1668.1,638.1 1677.5,638.3 1686.9,638.6 1696.3,638.9 1705.7,639.3 1715.1,639.5 1724.5,639.3 1733.9,639.5 1743.3,637.8 1752.7,639.2 1762.1,641.5 1771.5,638.0 1780.9,639.8 1790.3,638.6" fill="none" stroke="#9AC48A" stroke-width="1" stroke-linejoin="round"/>
<polyline points="1263.9,638.3 1273.3,637.2 1282.7,639.2 1292.1,638.7 1301.5,639.0 1310.9,637.9 1320.3,638.1 1329.7,637.2 1339.1,641.6 1348.5,638.0 1357.9,637.4 1367.3,638.2 1376.7,637.5 1386.1,639.1 1395.5,638.3 1404.9,641.1 1414.3,637.2 1423.7,637.4 1433.1,638.5 1442.5,641.8 1451.9,638.3 1461.3,635.7 1470.7,638.0 1480.1,639.1 1489.5,638.5 1498.9,638.7 1508.3,638.5 1517.7,637.1 1527.1,638.2 1536.5,637.6 1545.9,638.5 1555.3,638.4 1564.7,638.5 1574.1,638.3 1583.5,638.9 1592.9,640.9 1602.3,637.4 1611.7,639.0 1621.1,637.2 1630.5,638.5 1639.9,637.4 1649.3,638.3 1658.7,638.4 1668.1,637.1 1677.5,638.9 1686.9,637.9 1696.3,637.6 1705.7,641.3 1715.1,638.2 1724.5,637.4 1733.9,638.5 1743.3,638.0 1752.7,637.7 1762.1,639.0 1771.5,638.8 1780.9,637.4 1790.3,637.3" fill="none" stroke="#F2C96D" stroke-width="1" stroke-linejoin="round"/>
<polyline points="1263.9,642.7 1273.3,642.6 1282.7,644.2 1292.1,639.5 1301.5,642.1 1310.9,641.3 1320.3,641.9 1329.7,641.9 1339.1,646.8 1348.5,642.7 1357.9,641.3 1367.3,642.7 1376.7,641.7 1386.1,642.8 1395.5,641.8 1404.9,641.2 1414.3,642.5 1423.7,641.3 1433.1,642.3 1442.5,641.3 1451.9,641.1 1461.3,641.1 1470.7,641.9 1480.1,641.6 1489.5,642.1 1498.9,643.2 1508.3,641.2 1517.7,642.0 1527.1,644.5 1536.5,642.8 1545.9,642.9 1555.3,643.3 1564.7,641.4 1574.1,643.2 1583.5,642.0 1592.9,641.7 1602.3,641.4 1611.7,641.9 1621.1,638.8 1630.5,642.4 1639.9,645.5 1649.3,642.0 1658.7,641.9 1668.1,642.2 1677.5,641.3 1686.9,641.9 1696.3,642.3 1705.7,642.3 1715.1,642.7 1724.5,640.0 1733.9,642.2 1743.3,644.0 1752.7,639.9 1762.1,642.5 1771.5,642.2 1780.9,643.2 1790.3,641.4" fill="none" stroke="#E24D42" stroke-width="1" stroke-linejoin="round"/>
<polyline points="1263.9,641.0 1273.3,641.4 1282.7,641.9 1292.1,640.5 1301.5,638.7 1310.9,639.7 1320.3,640.0 1329.7,639.9 1339.1,641.6 1348.5,639.9 1357.9,641.3 1367.3,639.5 1376.7,636.7 1386.1,638.9 1395.5,641.0 1404.9,639.9 1414.3,639.5 1423.7,639.5 1433.1,641.3 1442.5,640.8 1451.9,641.0 1461.3,639.4 1470.7,641.4 1480.1,639.8 1489.5,639.8 1498.9,639.5 1508.3,640.8 1517.7,640.4 1527.1,640.6 1536.5,640.0 1545.9,641.3 1555.3,640.3 1564.7,640.0 1574.1,640.2 1583.5,640.8 1592.9,639.6 1602.3,639.6 1611.7,637.7 1621.1,640.8 1630.5,640.3 1639.9,639.5 1649.3,639.3 1658.7,641.4 1668.1,640.5 1677.5,637.5 1686.9,639.6 1696.3,641.4 1705.7,641.1 1715.1,639.6 1724.5,640.3 1733.9,641.5 1743.3,640.5 1752.7,640.8 1762.1,641.2 1771.5,639.5 1780.9,640.3 1790.3,640.5" fill="none" stroke="#6ED0E0" stroke-width="1" stroke-linejoin="round"/>
<polyline points="1263.9,639.3 1273.3,638.6 1282.7,640.6 1292.1,638.6 1301.5,639.3 1310.9,638.7 1320.3,639.6 1329.7,638.4 1339.1,641.4 1348.5,639.7 1357.9,640.3 1367.3,640.2 1376.7,639.2 1386.1,639.8 1395.5,638.3 1404.9,640.2 1414.3,640.2 1423.7,639.9 1433.1,639.7 1442.5,636.7 1451.9,637.8 1461.3,638.6 1470.7,640.2 1480.1,639.7 1489.5,642.1 1498.9,639.6 1508.3,639.3 1517.7,639.1 1527.1,639.3 1536.5,638.9 1545.9,635.8 1555.3,639.3 1564.7,642.9 1574.1,640.0 1583.5,639.7 1592.9,636.8 1602.3,636.7 1611.7,639.1 1621.1,638.3 1630.5,639.9 1639.9,640.4 1649.3,638.8 1658.7,637.0 1668.1,639.8 1677.5,640.0 1686.9,640.1 1696.3,639.8 1705.7,639.3 1715.1,638.9 1724.5,638.7 1733.9,639.1 1743.3,639.1 1752.7,638.3 1762.1,636.2 1771.5,640.1 1780.9,640.6 1790.3,639.6" fill="none" stroke="#447EBC" stroke-width="1" stroke-linejoin="round"/>
<polyline points="1263.9,642.3 1273.3,642.5 1282.7,644.1 1292.1,642.0 1301.5,642.5 1310.9,642.6 1320.3,642.2 1329.7,643.0 1339.1,645.2 1348.5,642.7 1357.9,641.4 1367.3,642.3 1376.7,642.3 1386.1,641.9 1395.5,642.0 1404.9,641.5 1414.3,641.5 1423.7,642.8 1433.1,643.2 1442.5,642.3 1451.9,641.8 1461.3,643.1 1470.7,642.4 1480.1,642.3 1489.5,642.2 1498.9,642.3 1508.3,642.1 1517.7,641.7 1527.1,641.4 1536.5,641.7 1545.9,644.9 1555.3,641.7 1564.7,642.4 1574.1,642.7 1583.5,642.4 1592.9,641.6 1602.3,643.0 1611.7,642.2 1621.1,641.6 1630.5,642.3 1639.9,642.2 1649.3,641.9 1658.7,642.7 1668.1,641.4 1677.5,641.9 1686.9,642.4 1696.3,642.0 1705.7,644.7 1715.1,644.4 1724.5,643.5 1733.9,640.6 1743.3,643.5 1752.7,641.5 1762.1,642.9 1771.5,643.0 1780.9,640.1 1790.3,640.4" fill="none" stroke="#EF843C" stroke-width="1" stroke-linejoin="round"/>
<polyline points="1263.9,643.2 1273.3,642.8 1282.7,642.1 1292.1,641.8 1301.5,642.4 1310.9,643.4 1320.3,642.3 1329.7,643.0 1339.1,649.0 1348.5,640.1 1357.9,642.0 1367.3,642.2 1376.7,643.6 1386.1,643.1 1395.5,643.5 1404.9,641.8 1414.3,642.8 1423.7,642.3 1433.1,643.4 1442.5,642.9 1451.9,642.2 1461.3,643.0 1470.7,642.8 1480.1,641.4 1489.5,641.6 1498.9,642.5 1508.3,642.4 1517.7,641.6 1527.1,643.5 1536.5,642.6 1545.9,643.0 1555.3,642.8 1564.7,640.7 1574.1,642.3 1583.5,642.9 1592.9,643.6 1602.3,643.1 1611.7,640.3 1621.1,642.7 1630.5,643.3 1639.9,642.6 1649.3,642.3 1658.7,641.8 1668.1,642.8 1677.5,641.9 1686.9,643.1 1696.3,641.3 1705.7,643.7 1715.1,643.3 1724.5,643.0 1733.9,643.7 1743.3,646.9 1752.7,644.7 1762.1,643.6 1771.5,643.4 1780.9,642.8 1790.3,642.3" fill="none" stroke="#EAB839" stroke-width="1" stroke-linejoin="round"/>
<polyline points="1263.9,637.2 1273.3,638.6 1282.7,638.2 1292.1,638.0 1301.5,637.5 1310.9,637.1 1320.3,638.1 1329.7,636.1 1339.1,638.3 1348.5,638.5 1357.9,636.9 1367.3,638.9 1376.7,639.1 1386.1,637.1 1395.5,637.9 1404.9,637.9 1414.3,637.4 1423.7,637.4 1433.1,638.1 1442.5,638.0 1451.9,637.0 1461.3,636.9 1470.7,637.4 1480.1,637.4 1489.5,637.1 1498.9,638.2 1508.3,637.0 1517.7,636.2 1527.1,638.2 1536.5,637.0 1545.9,637.9 1555.3,638.0 1564.7,639.0 1574.1,638.8 1583.5,637.6 1592.9,639.0 1602.3,637.5 1611.7,636.4 1621.1,637.3 1630.5,637.7 1639.9,639.0 1649.3,636.1 1658.7,637.3 1668.1,638.3 1677.5,637.8 1686.9,634.2 1696.3,637.7 1705.7,638.6 1715.1,641.8 1724.5,637.4 1733.9,637.6 1743.3,638.0 1752.7,637.9 1762.1,638.6 1771.5,638.2 1780.9,637.3 1790.3,636.9" fill="none" stroke="#E5A8E2" stroke-width="1" stroke-linejoin="round"/>
<polyline points="1263.9,635.9 1273.3,639.3 1282.7,640.5 1292.1,638.7 1301.5,638.9 1310.9,639.9 1320.3,638.9 1329.7,639.0 1339.1,641.9 1348.5,639.5 1357.9,638.5 1367.3,639.6 1376.7,640.2 1386.1,639.2 1395.5,640.0 1404.9,640.4 1414.3,639.5 1423.7,638.6 1433.1,639.1 1442.5,639.9 1451.9,638.6 1461.3,639.8 1470.7,638.3 1480.1,639.6 1489.5,639.9 1498.9,639.0 1508.3,639.6 1517.7,639.4 1527.1,639.2 1536.5,637.4 1545.9,639.8 1555.3,640.1 1564.7,640.0 1574.1,638.0 1583.5,640.2 1592.9,639.5 1602.3,639.8 1611.7,639.0 1621.1,639.8 1630.5,638.6 1639.9,639.4 1649.3,638.8 1658.7,638.7 1668.1,639.8 1677.5,640.3 1686.9,639.6 1696.3,638.6 1705.7,636.3 1715.1,639.4 1724.5,639.8 1733.9,639.5 1743.3,639.7 1752.7,638.5 1762.1,637.3 1771.5,640.2 1780.9,638.6 1790.3,639.3" fill="none" stroke="#82B5D8" stroke-width="1" stroke-linejoin="round"/>
<polyline points="1263.9,643.1 1273.3,644.2 1282.7,645.5 1292.1,643.6 1301.5,642.5 1310.9,643.0 1320.3,644.1 1329.7,642.3 1339.1,646.4 1348.5,643.6 1357.9,642.4 1367.3,642.4 1376.7,642.7 1386.1,642.3 1395.5,643.2 1404.9,642.6 1414.3,644.1 1423.7,643.1 1433.1,643.2 1442.5,642.9 1451.9,641.1 1461.3,645.8 1470.7,644.0 1480.1,643.6 1489.5,643.8 1498.9,644.1 1508.3,642.7 1517.7,644.1 1527.1,642.5 1536.5,643.9 1545.9,642.3 1555.3,642.4 1564.7,642.4 1574.1,643.9 1583.5,643.6 1592.9,643.0 1602.3,644.1 1611.7,643.4 1621.1,643.3 1630.5,642.6 1639.9,643.0 1649.3,642.7 1658.7,642.4 1668.1,643.5 1677.5,643.4 1686.9,643.3 1696.3,643.1 1705.7,643.9 1715.1,642.6 1724.5,642.7 1733.9,643.4 1743.3,643.2 1752.7,642.6 1762.1,642.4 1771.5,643.1 1780.9,644.7 1790.3,643.7" fill="none" stroke="#508642" stroke-width="1" stroke-linejoin="round"/>
<polyline points="1263.9,643.3 1273.3,642.0 1282.7,644.9 1292.1,642.1 1301.5,641.4 1310.9,640.0 1320.3,642.9 1329.7,642.6 1339.1,644.9 1348.5,642.7 1357.9,641.4 1367.3,642.2 1376.7,642.9 1386.1,642.2 1395.5,641.9 1404.9,642.9 1414.3,643.0 1423.7,643.2 1433.1,642.0 1442.5,643.1 1451.9,641.7 1461.3,641.6 1470.7,641.7 1480.1,642.7 1489.5,642.4 1498.9,642.3 1508.3,641.8 1517.7,642.0 1527.1,642.9 1536.5,641.8 1545.9,641.4 1555.3,642.1 1564.7,643.0 1574.1,642.3 1583.5,642.0 1592.9,642.5 1602.3,643.3 1611.7,642.8 1621.1,642.1 1630.5,642.7 1639.9,641.5 1649.3,641.3 1658.7,642.1 1668.1,639.4 1677.5,642.2 1686.9,645.9 1696.3,642.8 1705.7,642.9 1715.1,642.8 1724.5,641.6 1733.9,643.0 1743.3,642.8 1752.7,643.4 1762.1,643.1 1771.5,641.6 1780.9,643.2 1790.3,642.3" fill="none" stroke="#F9BA8F" stroke-width="1" stroke-linejoin="round"/>
<polyline points="1263.9,638.1 1273.3,639.3 1282.7,639.6 1292.1,638.1 1301.5,636.3 1310.9,639.0 1320.3,639.0 1329.7,639.6 1339.1,640.6 1348.5,638.7 1357.9,639.7 1367.3,641.8 1376.7,639.0 1386.1,638.9 1395.5,639.3 1404.9,636.9 1414.3,637.7 1423.7,639.1 1433.1,639.5 1442.5,638.5 1451.9,637.9 1461.3,638.3 1470.7,639.2 1480.1,637.7 1489.5,639.3 1498.9,637.8 1508.3,638.6 1517.7,638.5 1527.1,642.3 1536.5,637.7 1545.9,637.9 1555.3,640.3 1564.7,639.2 1574.1,638.5 1583.5,637.8 1592.9,638.3 1602.3,639.0 1611.7,638.3 1621.1,639.7 1630.5,639.4 1639.9,639.1 1649.3,641.2 1658.7,639.7 1668.1,638.6 1677.5,638.5 1686.9,639.1 1696.3,638.4 1705.7,640.9 1715.1,638.6 1724.5,639.4 1733.9,638.0 1743.3,639.3 1752.7,637.9 1762.1,638.1 1771.5,637.7 1780.9,638.8 1790.3,639.4" fill="none" stroke="#806EB7" stroke-width="1" stroke-linejoin="round"/>
<polyline points="1263.9,635.7 1273.3,638.8 1282.7,639.4 1292.1,638.5 1301.5,638.2 1310.9,639.0 1320.3,639.0 1329.7,638.1 1339.1,639.0 1348.5,637.3 1357.9,637.7 1367.3,639.2 1376.7,638.5 1386.1,637.5 1395.5,639.3 1404.9,639.0 1414.3,639.0 1423.7,637.5 1433.1,637.7 1442.5,638.6 1451.9,638.2 1461.3,638.4 1470.7,640.9 1480.1,638.0 1489.5,637.2 1498.9,635.8 1508.3,638.1 1517.7,637.4 1527.1,637.8 1536.5,639.1 1545.9,637.3 1555.3,638.4 1564.7,637.3 1574.1,638.0 1583.5,638.7 1592.9,638.8 1602.3,638.5 1611.7,637.9 1621.1,638.0 1630.5,638.4 1639.9,639.3 1649.3,637.9 1658.7,637.3 1668.1,637.4 1677.5,637.5 1686.9,635.4 1696.3,637.3 1705.7,638.9 1715.1,638.3 1724.5,637.3 1733.9,639.1 1743.3,638.2 1752.7,638.1 1762.1,638.3 1771.5,638.5 1780.9,637.7 1790.3,635.8" fill="none" stroke="#EA6460" stroke-width="1" stroke-linejoin="round"/>
<polyline points="1263.9,638.4 1273.3,638.6 1282.7,640.5 1292.1,638.9 1301.5,639.7 1310.9,640.0 1320.3,638.8 1329.7,640.2 1339.1,641.7 1348.5,640.0 1357.9,640.1 1367.3,639.4 1376.7,639.2 1386.1,638.5 1395.5,639.9 1404.9,639.9 1414.3,640.1 1423.7,637.1 1433.1,640.1 1442.5,638.2 1451.9,639.9 1461.3,640.0 1470.7,639.8 1480.1,639.4 1489.5,640.0 1498.9,639.1 1508.3,641.2 1517.7,638.2 1527.1,638.7 1536.5,636.5 1545.9,642.4 1555.3,638.9 1564.7,639.7 1574.1,642.4 1583.5,640.2 1592.9,639.0 1602.3,639.7 1611.7,639.7 1621.1,638.7 1630.5,642.7 1639.9,639.2 1649.3,639.5 1658.7,638.4 1668.1,637.8 1677.5,638.8 1686.9,640.0 1696.3,639.8 1705.7,639.8 1715.1,639.3 1724.5,640.3 1733.9,640.1 1743.3,638.4 1752.7,638.9 1762.1,639.6 1771.5,638.8 1780.9,638.9 1790.3,639.3" fill="none" stroke="#B7DBAB" stroke-width="1" stroke-linejoin="round"/>
</g>
<polyline points="1270.0,713.5 1790.0,713.5" fill="none" stroke="#967302" stroke-width="1" stroke-linejoin="round"/>
<rect x="1245" y="749" width="14" height="4" rx="1" fill="#A6449B"/>
<rect x="1245" y="769" width="14" height="4" rx="1" fill="#705DA0"/>
<rect x="1245" y="790" width="14" height="4" rx="1" fill="#9AC48A"/>
<rect x="1245" y="811" width="14" height="4" rx="1" fill="#F2C96D"/>
<g>
<g transform="translate(303.50,25.8) scale(1,1.05)">
<text x="0.0" y="0.0" font-size="15" text-anchor="middle" fill="#ccccdc" textLength="191.7" lengthAdjust="spacingAndGlyphs" stroke="#ccccdc" stroke-width="0.45">PUT Account-Container-Object</text>
</g>
<g transform="translate(916.50,25.8) scale(1,1.05)">
<text x="0.0" y="0.0" font-size="15" text-anchor="middle" fill="#ccccdc" textLength="76.0" lengthAdjust="spacingAndGlyphs" stroke="#ccccdc" stroke-width="0.45">Per Disk BW</text>
</g>
<g transform="translate(1528.50,25.8) scale(1,1.05)">
<text x="0.0" y="0.0" font-size="15" text-anchor="middle" fill="#ccccdc" textLength="27.0" lengthAdjust="spacingAndGlyphs" stroke="#ccccdc" stroke-width="0.45">CPU</text>
</g>
<g transform="translate(303.50,291.8) scale(1,1.05)">
<text x="0.0" y="0.0" font-size="15" text-anchor="middle" fill="#ccccdc" textLength="245.0" lengthAdjust="spacingAndGlyphs" stroke="#ccccdc" stroke-width="0.45">GET &amp; HEAD Account/Container/Object</text>
</g>
<g transform="translate(916.50,291.8) scale(1,1.05)">
<text x="0.0" y="0.0" font-size="15" text-anchor="middle" fill="#ccccdc" textLength="127.0" lengthAdjust="spacingAndGlyphs" stroke="#ccccdc" stroke-width="0.45">Per Disk Throughput</text>
</g>
<g transform="translate(1528.50,291.8) scale(1,1.05)">
<text x="0.0" y="0.0" font-size="15" text-anchor="middle" fill="#ccccdc" textLength="27.0" lengthAdjust="spacingAndGlyphs" stroke="#ccccdc" stroke-width="0.45">CPU</text>
</g>
<g transform="translate(303.50,557.8) scale(1,1.05)">
<text x="0.0" y="0.0" font-size="15" text-anchor="middle" fill="#ccccdc" textLength="68.0" lengthAdjust="spacingAndGlyphs" stroke="#ccccdc" stroke-width="0.45">used inode</text>
</g>
<g transform="translate(916.50,557.8) scale(1,1.05)">
<text x="0.0" y="0.0" font-size="15" text-anchor="middle" fill="#ccccdc" textLength="117.8" lengthAdjust="spacingAndGlyphs" stroke="#ccccdc" stroke-width="0.45">Memory Utilization</text>
</g>
<g transform="translate(1528.50,557.8) scale(1,1.05)">
<text x="0.0" y="0.0" font-size="15" text-anchor="middle" fill="#ccccdc" textLength="93.4" lengthAdjust="spacingAndGlyphs" stroke="#ccccdc" stroke-width="0.45">Disk Utilization</text>
</g>
</g>
<g style="will-change:transform">
<text x="17.8" y="59.0" font-size="11.5" text-anchor="end" fill="#ccccdc" textLength="6.1" lengthAdjust="spacingAndGlyphs">4</text>
<text x="17.8" y="90.0" font-size="11.5" text-anchor="end" fill="#ccccdc" textLength="6.1" lengthAdjust="spacingAndGlyphs">3</text>
<text x="17.8" y="122.0" font-size="11.5" text-anchor="end" fill="#ccccdc" textLength="6.1" lengthAdjust="spacingAndGlyphs">2</text>
<text x="17.8" y="153.0" font-size="11.5" text-anchor="end" fill="#ccccdc" textLength="6.1" lengthAdjust="spacingAndGlyphs">1</text>
<text x="17.8" y="185.0" font-size="11.5" text-anchor="end" fill="#ccccdc" textLength="6.1" lengthAdjust="spacingAndGlyphs">0</text>
<text x="49.4" y="200.0" font-size="11.5" text-anchor="middle" fill="#ccccdc" textLength="29.5" lengthAdjust="spacingAndGlyphs">21:30</text>
<text x="165.4" y="200.0" font-size="11.5" text-anchor="middle" fill="#ccccdc" textLength="29.5" lengthAdjust="spacingAndGlyphs">21:32</text>
<text x="282.4" y="200.0" font-size="11.5" text-anchor="middle" fill="#ccccdc" textLength="29.5" lengthAdjust="spacingAndGlyphs">21:34</text>
<text x="399.4" y="200.0" font-size="11.5" text-anchor="middle" fill="#ccccdc" textLength="29.5" lengthAdjust="spacingAndGlyphs">21:36</text>
<text x="515.4" y="200.0" font-size="11.5" text-anchor="middle" fill="#ccccdc" textLength="29.5" lengthAdjust="spacingAndGlyphs">21:38</text>
<text x="47.8" y="225.0" font-size="12" text-anchor="start" fill="#ccccdc" textLength="72.8" lengthAdjust="spacingAndGlyphs">put container</text>
<text x="131.8" y="225.0" font-size="12" text-anchor="start" fill="#ccccdc" textLength="36.7" lengthAdjust="spacingAndGlyphs">Max: 0</text>
<text x="174.2" y="225.0" font-size="12" text-anchor="start" fill="#ccccdc" textLength="33.8" lengthAdjust="spacingAndGlyphs">Avg: 0</text>
<text x="214.6" y="225.0" font-size="12" text-anchor="start" fill="#ccccdc" textLength="39.8" lengthAdjust="spacingAndGlyphs">Total: 0</text>
<text x="292.5" y="225.0" font-size="12" text-anchor="start" fill="#ccccdc" textLength="65.0" lengthAdjust="spacingAndGlyphs">put account</text>
<text x="369.0" y="225.0" font-size="12" text-anchor="start" fill="#ccccdc" textLength="54.1" lengthAdjust="spacingAndGlyphs">Max: 3.60</text>
<text x="428.8" y="225.0" font-size="12" text-anchor="start" fill="#ccccdc" textLength="64.9" lengthAdjust="spacingAndGlyphs">Avg: 0.0632</text>
<text x="499.5" y="225.0" font-size="12" text-anchor="start" fill="#ccccdc" textLength="57.8" lengthAdjust="spacingAndGlyphs">Total: 3.60</text>
<text x="47.8" y="246.0" font-size="12" text-anchor="start" fill="#ccccdc" textLength="54.9" lengthAdjust="spacingAndGlyphs">put object</text>
<text x="114.0" y="246.0" font-size="12" text-anchor="start" fill="#ccccdc" textLength="37.0" lengthAdjust="spacingAndGlyphs">Max: 0</text>
<text x="156.8" y="246.0" font-size="12" text-anchor="start" fill="#ccccdc" textLength="33.7" lengthAdjust="spacingAndGlyphs">Avg: 0</text>
<text x="197.2" y="246.0" font-size="12" text-anchor="start" fill="#ccccdc" textLength="40.3" lengthAdjust="spacingAndGlyphs">Total: 0</text>
<text x="662.3" y="59.0" font-size="11.5" text-anchor="end" fill="#ccccdc" textLength="38.0" lengthAdjust="spacingAndGlyphs">4 MB/s</text>
<text x="662.3" y="84.0" font-size="11.5" text-anchor="end" fill="#ccccdc" textLength="38.0" lengthAdjust="spacingAndGlyphs">3 MB/s</text>
<text x="662.3" y="109.0" font-size="11.5" text-anchor="end" fill="#ccccdc" textLength="38.0" lengthAdjust="spacingAndGlyphs">2 MB/s</text>
<text x="662.3" y="134.0" font-size="11.5" text-anchor="end" fill="#ccccdc" textLength="38.0" lengthAdjust="spacingAndGlyphs">1 MB/s</text>
<text x="662.3" y="160.0" font-size="11.5" text-anchor="end" fill="#ccccdc" textLength="33.6" lengthAdjust="spacingAndGlyphs">0 kB/s</text>
<text x="689.5" y="175.0" font-size="11.5" text-anchor="middle" fill="#ccccdc" textLength="29.5" lengthAdjust="spacingAndGlyphs">21:30</text>
<text x="800.1" y="175.0" font-size="11.5" text-anchor="middle" fill="#ccccdc" textLength="29.5" lengthAdjust="spacingAndGlyphs">21:32</text>
<text x="910.8" y="175.0" font-size="11.5" text-anchor="middle" fill="#ccccdc" textLength="29.5" lengthAdjust="spacingAndGlyphs">21:34</text>
<text x="1021.5" y="175.0" font-size="11.5" text-anchor="middle" fill="#ccccdc" textLength="29.5" lengthAdjust="spacingAndGlyphs">21:36</text>
<text x="1132.1" y="175.0" font-size="11.5" text-anchor="middle" fill="#ccccdc" textLength="29.5" lengthAdjust="spacingAndGlyphs">21:38</text>
<text x="848.0" y="190.0" font-size="12" text-anchor="middle" fill="#ccccdc">-</text>
<text x="1130.4" y="190.0" font-size="12" text-anchor="middle" fill="#ccccdc">-</text>
<text x="660.8" y="205.0" font-size="12" text-anchor="start" fill="#ccccdc" textLength="159.9" lengthAdjust="spacingAndGlyphs">netdata.disk.sdw.reads.mean</text>
<text x="832.3" y="205.0" font-size="12" text-anchor="start" fill="#ccccdc" textLength="76.2" lengthAdjust="spacingAndGlyphs">Avg: 269 kB/s</text>
<text x="946.2" y="205.0" font-size="12" text-anchor="start" fill="#ccccdc" textLength="158.2" lengthAdjust="spacingAndGlyphs">netdata.disk.sdx.reads.mean</text>
<text x="1115.7" y="205.0" font-size="12" text-anchor="start" fill="#ccccdc" textLength="76.4" lengthAdjust="spacingAndGlyphs">Avg: 271 kB/s</text>
<text x="660.8" y="226.0" font-size="12" text-anchor="start" fill="#ccccdc" textLength="156.6" lengthAdjust="spacingAndGlyphs">netdata.disk.sdy.reads.mean</text>
<text x="829.3" y="226.0" font-size="12" text-anchor="start" fill="#ccccdc" textLength="75.8" lengthAdjust="spacingAndGlyphs">Avg: 308 kB/s</text>
<text x="942.9" y="226.0" font-size="12" text-anchor="start" fill="#ccccdc" textLength="158.2" lengthAdjust="spacingAndGlyphs">netdata.disk.sdz.reads.mean</text>
<text x="1112.7" y="226.0" font-size="12" text-anchor="start" fill="#ccccdc" textLength="76.1" lengthAdjust="spacingAndGlyphs">Avg: 268 kB/s</text>
<text x="660.8" y="247.0" font-size="12" text-anchor="start" fill="#ccccdc" textLength="45.4" lengthAdjust="spacingAndGlyphs">Mean-W</text>
<text x="717.1" y="247.0" font-size="12" text-anchor="start" fill="#ccccdc" textLength="79.4" lengthAdjust="spacingAndGlyphs">Avg: 27.9 kB/s</text>
<text x="834.6" y="247.0" font-size="12" text-anchor="start" fill="#ccccdc" textLength="42.1" lengthAdjust="spacingAndGlyphs">Mean-R</text>
<text x="887.9" y="247.0" font-size="12" text-anchor="start" fill="#ccccdc" textLength="76.2" lengthAdjust="spacingAndGlyphs">Avg: 264 kB/s</text>
<text x="1271.2" y="59.0" font-size="11.5" text-anchor="end" fill="#ccccdc" textLength="34.9" lengthAdjust="spacingAndGlyphs">2000%</text>
<text x="1271.2" y="84.0" font-size="11.5" text-anchor="end" fill="#ccccdc" textLength="34.9" lengthAdjust="spacingAndGlyphs">1500%</text>
<text x="1271.2" y="109.0" font-size="11.5" text-anchor="end" fill="#ccccdc" textLength="34.9" lengthAdjust="spacingAndGlyphs">1000%</text>
<text x="1271.2" y="134.0" font-size="11.5" text-anchor="end" fill="#ccccdc" textLength="28.2" lengthAdjust="spacingAndGlyphs">500%</text>
<text x="1271.2" y="160.0" font-size="11.5" text-anchor="end" fill="#ccccdc" textLength="14.7" lengthAdjust="spacingAndGlyphs">0%</text>
<text x="1298.4" y="175.0" font-size="11.5" text-anchor="middle" fill="#ccccdc" textLength="29.5" lengthAdjust="spacingAndGlyphs">21:30</text>
<text x="1410.4" y="175.0" font-size="11.5" text-anchor="middle" fill="#ccccdc" textLength="29.5" lengthAdjust="spacingAndGlyphs">21:32</text>
<text x="1521.4" y="175.0" font-size="11.5" text-anchor="middle" fill="#ccccdc" textLength="29.5" lengthAdjust="spacingAndGlyphs">21:34</text>
<text x="1632.4" y="175.0" font-size="11.5" text-anchor="middle" fill="#ccccdc" textLength="29.5" lengthAdjust="spacingAndGlyphs">21:36</text>
<text x="1743.4" y="175.0" font-size="11.5" text-anchor="middle" fill="#ccccdc" textLength="29.5" lengthAdjust="spacingAndGlyphs">21:38</text>
<text x="1272.8" y="200.0" font-size="12" text-anchor="start" fill="#ccccdc" textLength="76.0" lengthAdjust="spacingAndGlyphs">cpu.object_se</text>
<text x="1360.0" y="200.0" font-size="12" text-anchor="start" fill="#ccccdc" textLength="56.5" lengthAdjust="spacingAndGlyphs">Min: 623%</text>
<text x="1422.4" y="200.0" font-size="12" text-anchor="start" fill="#ccccdc" textLength="56.2" lengthAdjust="spacingAndGlyphs">Avg: 677%</text>
<text x="1516.6" y="200.0" font-size="12" text-anchor="start" fill="#ccccdc" textLength="76.7" lengthAdjust="spacingAndGlyphs">cpu.object_au</text>
<text x="1604.8" y="200.0" font-size="12" text-anchor="start" fill="#ccccdc" textLength="59.5" lengthAdjust="spacingAndGlyphs">Min: 5.31%</text>
<text x="1670.3" y="200.0" font-size="12" text-anchor="start" fill="#ccccdc" textLength="60.1" lengthAdjust="spacingAndGlyphs">Avg: 5.50%</text>
<text x="1272.8" y="221.0" font-size="12" text-anchor="start" fill="#ccccdc" textLength="73.7" lengthAdjust="spacingAndGlyphs">cpu.object_re</text>
<text x="1358.0" y="221.0" font-size="12" text-anchor="start" fill="#ccccdc" textLength="66.1" lengthAdjust="spacingAndGlyphs">Min: 0.190%</text>
<text x="1430.4" y="221.0" font-size="12" text-anchor="start" fill="#ccccdc" textLength="59.8" lengthAdjust="spacingAndGlyphs">Avg: 8.23%</text>
<text x="1527.8" y="221.0" font-size="12" text-anchor="start" fill="#ccccdc" textLength="77.0" lengthAdjust="spacingAndGlyphs">cpu.object_up</text>
<text x="1616.1" y="221.0" font-size="12" text-anchor="start" fill="#ccccdc" textLength="42.6" lengthAdjust="spacingAndGlyphs">Min: 0%</text>
<text x="1665.0" y="221.0" font-size="12" text-anchor="start" fill="#ccccdc" textLength="80.3" lengthAdjust="spacingAndGlyphs">Avg: 0.00680%</text>
<text x="1272.8" y="242.0" font-size="12" text-anchor="start" fill="#ccccdc" textLength="93.5" lengthAdjust="spacingAndGlyphs">cpu.container_se</text>
<text x="1377.8" y="242.0" font-size="12" text-anchor="start" fill="#ccccdc" textLength="59.5" lengthAdjust="spacingAndGlyphs">Min: 1.04%</text>
<text x="1443.2" y="242.0" font-size="12" text-anchor="start" fill="#ccccdc" textLength="59.9" lengthAdjust="spacingAndGlyphs">Avg: 4.15%</text>
<text x="1541.1" y="242.0" font-size="12" text-anchor="start" fill="#ccccdc" textLength="85.9" lengthAdjust="spacingAndGlyphs">cpu.account_se</text>
<text x="1638.5" y="242.0" font-size="12" text-anchor="start" fill="#ccccdc" textLength="59.5" lengthAdjust="spacingAndGlyphs">Min: 1.04%</text>
<text x="1704.0" y="242.0" font-size="12" text-anchor="start" fill="#ccccdc" textLength="60.1" lengthAdjust="spacingAndGlyphs">Avg: 1.39%</text>
<text x="44.8" y="325.0" font-size="11.5" text-anchor="end" fill="#ccccdc" textLength="33.2" lengthAdjust="spacingAndGlyphs">2.50 K</text>
<text x="44.8" y="346.0" font-size="11.5" text-anchor="end" fill="#ccccdc" textLength="16.6" lengthAdjust="spacingAndGlyphs">2 K</text>
<text x="44.8" y="367.0" font-size="11.5" text-anchor="end" fill="#ccccdc" textLength="33.2" lengthAdjust="spacingAndGlyphs">1.50 K</text>
<text x="44.8" y="388.0" font-size="11.5" text-anchor="end" fill="#ccccdc" textLength="16.6" lengthAdjust="spacingAndGlyphs">1 K</text>
<text x="44.8" y="409.0" font-size="11.5" text-anchor="end" fill="#ccccdc" textLength="19.6" lengthAdjust="spacingAndGlyphs">500</text>
<text x="44.8" y="430.0" font-size="11.5" text-anchor="end" fill="#ccccdc" textLength="6.1" lengthAdjust="spacingAndGlyphs">0</text>
<text x="72.4" y="445.0" font-size="11.5" text-anchor="middle" fill="#ccccdc" textLength="29.5" lengthAdjust="spacingAndGlyphs">21:30</text>
<text x="183.4" y="445.0" font-size="11.5" text-anchor="middle" fill="#ccccdc" textLength="29.5" lengthAdjust="spacingAndGlyphs">21:32</text>
<text x="295.4" y="445.0" font-size="11.5" text-anchor="middle" fill="#ccccdc" textLength="29.5" lengthAdjust="spacingAndGlyphs">21:34</text>
<text x="406.4" y="445.0" font-size="11.5" text-anchor="middle" fill="#ccccdc" textLength="29.5" lengthAdjust="spacingAndGlyphs">21:36</text>
<text x="518.4" y="445.0" font-size="11.5" text-anchor="middle" fill="#ccccdc" textLength="29.5" lengthAdjust="spacingAndGlyphs">21:38</text>
<text x="47.9" y="470.0" font-size="12" text-anchor="start" fill="#ccccdc" textLength="73.9" lengthAdjust="spacingAndGlyphs">head account</text>
<text x="133.9" y="470.0" font-size="12" text-anchor="start" fill="#ccccdc" textLength="53.5" lengthAdjust="spacingAndGlyphs">Max: 2.30</text>
<text x="193.0" y="470.0" font-size="12" text-anchor="start" fill="#ccccdc" textLength="58.3" lengthAdjust="spacingAndGlyphs">Avg: 0.414</text>
<text x="257.7" y="470.0" font-size="12" text-anchor="start" fill="#ccccdc" textLength="56.9" lengthAdjust="spacingAndGlyphs">Total: 23.6</text>
<text x="47.9" y="491.0" font-size="12" text-anchor="start" fill="#ccccdc" textLength="81.4" lengthAdjust="spacingAndGlyphs">head container</text>
<text x="140.9" y="491.0" font-size="12" text-anchor="start" fill="#ccccdc" textLength="60.6" lengthAdjust="spacingAndGlyphs">Max: 0.289</text>
<text x="207.3" y="491.0" font-size="12" text-anchor="start" fill="#ccccdc" textLength="64.1" lengthAdjust="spacingAndGlyphs">Avg: 0.0351</text>
<text x="278.6" y="491.0" font-size="12" text-anchor="start" fill="#ccccdc" textLength="40.4" lengthAdjust="spacingAndGlyphs">Total: 2</text>
<text x="47.9" y="512.0" font-size="12" text-anchor="start" fill="#ccccdc" textLength="54.7" lengthAdjust="spacingAndGlyphs">get object</text>
<text x="114.0" y="512.0" font-size="12" text-anchor="start" fill="#ccccdc" textLength="64.6" lengthAdjust="spacingAndGlyphs">Max: 2.07 K</text>
<text x="184.6" y="512.0" font-size="12" text-anchor="start" fill="#ccccdc" textLength="61.9" lengthAdjust="spacingAndGlyphs">Avg: 2.02 K</text>
<text x="252.4" y="512.0" font-size="12" text-anchor="start" fill="#ccccdc" textLength="65.2" lengthAdjust="spacingAndGlyphs">Total: 115 K</text>
<text x="664.4" y="325.0" font-size="11.5" text-anchor="end" fill="#ccccdc" textLength="19.6" lengthAdjust="spacingAndGlyphs">100</text>
<text x="664.4" y="350.0" font-size="11.5" text-anchor="end" fill="#ccccdc" textLength="12.9" lengthAdjust="spacingAndGlyphs">75</text>
<text x="664.4" y="375.0" font-size="11.5" text-anchor="end" fill="#ccccdc" textLength="12.9" lengthAdjust="spacingAndGlyphs">50</text>
<text x="664.4" y="400.0" font-size="11.5" text-anchor="end" fill="#ccccdc" textLength="12.9" lengthAdjust="spacingAndGlyphs">25</text>
<text x="664.4" y="426.0" font-size="11.5" text-anchor="end" fill="#ccccdc" textLength="6.1" lengthAdjust="spacingAndGlyphs">0</text>
<text x="691.2" y="441.0" font-size="11.5" text-anchor="middle" fill="#ccccdc" textLength="29.5" lengthAdjust="spacingAndGlyphs">21:30</text>
<text x="801.5" y="441.0" font-size="11.5" text-anchor="middle" fill="#ccccdc" textLength="29.5" lengthAdjust="spacingAndGlyphs">21:32</text>
<text x="911.9" y="441.0" font-size="11.5" text-anchor="middle" fill="#ccccdc" textLength="29.5" lengthAdjust="spacingAndGlyphs">21:34</text>
<text x="1022.2" y="441.0" font-size="11.5" text-anchor="middle" fill="#ccccdc" textLength="29.5" lengthAdjust="spacingAndGlyphs">21:36</text>
<text x="1132.6" y="441.0" font-size="11.5" text-anchor="middle" fill="#ccccdc" textLength="29.5" lengthAdjust="spacingAndGlyphs">21:38</text>
<text x="742.0" y="456.0" font-size="12" text-anchor="middle" fill="#ccccdc" textLength="2.0" lengthAdjust="spacingAndGlyphs">-</text>
<text x="873.8" y="456.0" font-size="12" text-anchor="middle" fill="#ccccdc" textLength="4.0" lengthAdjust="spacingAndGlyphs">-</text>
<text x="1026.7" y="456.0" font-size="12" text-anchor="middle" fill="#ccccdc" textLength="2.0" lengthAdjust="spacingAndGlyphs">-</text>
<text x="1156.8" y="456.0" font-size="12" text-anchor="middle" fill="#ccccdc" textLength="4.0" lengthAdjust="spacingAndGlyphs">-</text>
<text x="660.8" y="471.0" font-size="12" text-anchor="start" fill="#ccccdc" textLength="186.0" lengthAdjust="spacingAndGlyphs">netdata.disk_ops.sdw.reads.mean</text>
<text x="858.4" y="471.0" font-size="12" text-anchor="start" fill="#ccccdc" textLength="50.7" lengthAdjust="spacingAndGlyphs">Avg: 67.8</text>
<text x="946.8" y="471.0" font-size="12" text-anchor="start" fill="#ccccdc" textLength="184.0" lengthAdjust="spacingAndGlyphs">netdata.disk_ops.sdx.reads.mean</text>
<text x="1142.0" y="471.0" font-size="12" text-anchor="start" fill="#ccccdc" textLength="51.0" lengthAdjust="spacingAndGlyphs">Avg: 68.3</text>
<text x="660.8" y="492.0" font-size="12" text-anchor="start" fill="#ccccdc" textLength="182.7" lengthAdjust="spacingAndGlyphs">netdata.disk_ops.sdy.reads.mean</text>
<text x="855.1" y="492.0" font-size="12" text-anchor="start" fill="#ccccdc" textLength="50.6" lengthAdjust="spacingAndGlyphs">Avg: 77.7</text>
<text x="943.5" y="492.0" font-size="12" text-anchor="start" fill="#ccccdc" textLength="184.0" lengthAdjust="spacingAndGlyphs">netdata.disk_ops.sdz.reads.mean</text>
<text x="1139.1" y="492.0" font-size="12" text-anchor="start" fill="#ccccdc" textLength="51.3" lengthAdjust="spacingAndGlyphs">Avg: 67.6</text>
<text x="660.8" y="513.0" font-size="12" text-anchor="start" fill="#ccccdc" textLength="45.4" lengthAdjust="spacingAndGlyphs">Mean-W</text>
<text x="717.1" y="513.0" font-size="12" text-anchor="start" fill="#ccccdc" textLength="51.3" lengthAdjust="spacingAndGlyphs">Avg: 2.70</text>
<text x="806.1" y="513.0" font-size="12" text-anchor="start" fill="#ccccdc" textLength="42.1" lengthAdjust="spacingAndGlyphs">Mean-R</text>
<text x="859.4" y="513.0" font-size="12" text-anchor="start" fill="#ccccdc" textLength="51.6" lengthAdjust="spacingAndGlyphs">Avg: 68.5</text>
<text x="1264.9" y="325.0" font-size="11.5" text-anchor="end" fill="#ccccdc" textLength="28.2" lengthAdjust="spacingAndGlyphs">100%</text>
<text x="1264.9" y="357.0" font-size="11.5" text-anchor="end" fill="#ccccdc" textLength="21.5" lengthAdjust="spacingAndGlyphs">75%</text>
<text x="1264.9" y="388.0" font-size="11.5" text-anchor="end" fill="#ccccdc" textLength="21.5" lengthAdjust="spacingAndGlyphs">50%</text>
<text x="1264.9" y="420.0" font-size="11.5" text-anchor="end" fill="#ccccdc" textLength="21.5" lengthAdjust="spacingAndGlyphs">25%</text>
<text x="1264.9" y="451.0" font-size="11.5" text-anchor="end" fill="#ccccdc" textLength="14.7" lengthAdjust="spacingAndGlyphs">0%</text>
<text x="1292.3" y="466.0" font-size="11.5" text-anchor="middle" fill="#ccccdc" textLength="29.5" lengthAdjust="spacingAndGlyphs">21:30</text>
<text x="1404.8" y="466.0" font-size="11.5" text-anchor="middle" fill="#ccccdc" textLength="29.5" lengthAdjust="spacingAndGlyphs">21:32</text>
<text x="1517.3" y="466.0" font-size="11.5" text-anchor="middle" fill="#ccccdc" textLength="29.5" lengthAdjust="spacingAndGlyphs">21:34</text>
<text x="1629.8" y="466.0" font-size="11.5" text-anchor="middle" fill="#ccccdc" textLength="29.5" lengthAdjust="spacingAndGlyphs">21:36</text>
<text x="1742.3" y="466.0" font-size="11.5" text-anchor="middle" fill="#ccccdc" textLength="29.5" lengthAdjust="spacingAndGlyphs">21:38</text>
<text x="1272.8" y="491.0" font-size="12" text-anchor="start" fill="#ccccdc" textLength="25.4" lengthAdjust="spacingAndGlyphs">User</text>
<text x="1309.8" y="491.0" font-size="12" text-anchor="start" fill="#ccccdc" textLength="59.4" lengthAdjust="spacingAndGlyphs">Min: 44.5%</text>
<text x="1375.2" y="491.0" font-size="12" text-anchor="start" fill="#ccccdc" textLength="60.1" lengthAdjust="spacingAndGlyphs">Avg: 48.7%</text>
<text x="1472.7" y="491.0" font-size="12" text-anchor="start" fill="#ccccdc" textLength="41.3" lengthAdjust="spacingAndGlyphs">System</text>
<text x="1525.5" y="491.0" font-size="12" text-anchor="start" fill="#ccccdc" textLength="59.5" lengthAdjust="spacingAndGlyphs">Min: 7.15%</text>
<text x="1590.6" y="491.0" font-size="12" text-anchor="start" fill="#ccccdc" textLength="60.5" lengthAdjust="spacingAndGlyphs">Avg: 7.78%</text>
<text x="1272.8" y="512.0" font-size="12" text-anchor="start" fill="#ccccdc" textLength="33.7" lengthAdjust="spacingAndGlyphs">Iowait</text>
<text x="1318.0" y="512.0" font-size="12" text-anchor="start" fill="#ccccdc" textLength="59.5" lengthAdjust="spacingAndGlyphs">Min: 18.2%</text>
<text x="1383.5" y="512.0" font-size="12" text-anchor="start" fill="#ccccdc" textLength="60.1" lengthAdjust="spacingAndGlyphs">Avg: 18.8%</text>
<text x="1480.9" y="512.0" font-size="12" text-anchor="start" fill="#ccccdc" textLength="20.2" lengthAdjust="spacingAndGlyphs">idle</text>
<text x="1513.0" y="512.0" font-size="12" text-anchor="start" fill="#ccccdc" textLength="59.5" lengthAdjust="spacingAndGlyphs">Min: 21.7%</text>
<text x="1578.1" y="512.0" font-size="12" text-anchor="start" fill="#ccccdc" textLength="60.1" lengthAdjust="spacingAndGlyphs">Avg: 22.5%</text>
<text x="51.2" y="591.0" font-size="11.5" text-anchor="end" fill="#ccccdc" textLength="39.8" lengthAdjust="spacingAndGlyphs">400000</text>
<text x="51.2" y="622.0" font-size="11.5" text-anchor="end" fill="#ccccdc" textLength="39.8" lengthAdjust="spacingAndGlyphs">300000</text>
<text x="51.2" y="654.0" font-size="11.5" text-anchor="end" fill="#ccccdc" textLength="39.8" lengthAdjust="spacingAndGlyphs">200000</text>
<text x="51.2" y="685.0" font-size="11.5" text-anchor="end" fill="#ccccdc" textLength="39.8" lengthAdjust="spacingAndGlyphs">100000</text>
<text x="51.2" y="717.0" font-size="11.5" text-anchor="end" fill="#ccccdc" textLength="6.1" lengthAdjust="spacingAndGlyphs">0</text>
<text x="78.4" y="732.0" font-size="11.5" text-anchor="middle" fill="#ccccdc" textLength="29.5" lengthAdjust="spacingAndGlyphs">21:30</text>
<text x="188.4" y="732.0" font-size="11.5" text-anchor="middle" fill="#ccccdc" textLength="29.5" lengthAdjust="spacingAndGlyphs">21:32</text>
<text x="299.4" y="732.0" font-size="11.5" text-anchor="middle" fill="#ccccdc" textLength="29.5" lengthAdjust="spacingAndGlyphs">21:34</text>
<text x="409.4" y="732.0" font-size="11.5" text-anchor="middle" fill="#ccccdc" textLength="29.5" lengthAdjust="spacingAndGlyphs">21:36</text>
<text x="519.4" y="732.0" font-size="11.5" text-anchor="middle" fill="#ccccdc" textLength="29.5" lengthAdjust="spacingAndGlyphs">21:38</text>
<text x="47.6" y="754.0" font-size="12" text-anchor="start" fill="#ccccdc" textLength="232.5" lengthAdjust="spacingAndGlyphs">netdata.disk_inodes._srv_node_disk7.used</text>
<text x="291.6" y="754.0" font-size="12" text-anchor="start" fill="#ccccdc" textLength="71.6" lengthAdjust="spacingAndGlyphs">Max: 306447</text>
<text x="368.3" y="754.0" font-size="12" text-anchor="start" fill="#ccccdc" textLength="69.1" lengthAdjust="spacingAndGlyphs">Avg: 306447</text>
<text x="47.6" y="775.0" font-size="12" text-anchor="start" fill="#ccccdc" textLength="232.5" lengthAdjust="spacingAndGlyphs">netdata.disk_inodes._srv_node_disk8.used</text>
<text x="291.6" y="775.0" font-size="12" text-anchor="start" fill="#ccccdc" textLength="71.6" lengthAdjust="spacingAndGlyphs">Max: 306439</text>
<text x="368.3" y="775.0" font-size="12" text-anchor="start" fill="#ccccdc" textLength="69.1" lengthAdjust="spacingAndGlyphs">Avg: 306439</text>
<text x="47.6" y="795.0" font-size="12" text-anchor="start" fill="#ccccdc" textLength="232.5" lengthAdjust="spacingAndGlyphs">netdata.disk_inodes._srv_node_disk9.used</text>
<text x="291.6" y="795.0" font-size="12" text-anchor="start" fill="#ccccdc" textLength="71.6" lengthAdjust="spacingAndGlyphs">Max: 306446</text>
<text x="368.3" y="795.0" font-size="12" text-anchor="start" fill="#ccccdc" textLength="69.1" lengthAdjust="spacingAndGlyphs">Avg: 306446</text>
<text x="47.6" y="816.0" font-size="12" text-anchor="start" fill="#ccccdc" textLength="70.5" lengthAdjust="spacingAndGlyphs">Mean-inodes</text>
<text x="129.9" y="816.0" font-size="12" text-anchor="start" fill="#ccccdc" textLength="71.6" lengthAdjust="spacingAndGlyphs">Max: 306679</text>
<text x="207.3" y="816.0" font-size="12" text-anchor="start" fill="#ccccdc" textLength="68.1" lengthAdjust="spacingAndGlyphs">Avg: 306679</text>
<text x="668.7" y="591.0" font-size="11.5" text-anchor="end" fill="#ccccdc" textLength="41.0" lengthAdjust="spacingAndGlyphs">146 GiB</text>
<text x="668.7" y="632.0" font-size="11.5" text-anchor="end" fill="#ccccdc" textLength="44.1" lengthAdjust="spacingAndGlyphs">97.7 GiB</text>
<text x="668.7" y="675.0" font-size="11.5" text-anchor="end" fill="#ccccdc" textLength="44.1" lengthAdjust="spacingAndGlyphs">48.8 GiB</text>
<text x="668.7" y="717.0" font-size="11.5" text-anchor="end" fill="#ccccdc" textLength="29.9" lengthAdjust="spacingAndGlyphs">0 MiB</text>
<text x="695.4" y="732.0" font-size="11.5" text-anchor="middle" fill="#ccccdc" textLength="29.5" lengthAdjust="spacingAndGlyphs">21:30</text>
<text x="804.6" y="732.0" font-size="11.5" text-anchor="middle" fill="#ccccdc" textLength="29.5" lengthAdjust="spacingAndGlyphs">21:32</text>
<text x="913.8" y="732.0" font-size="11.5" text-anchor="middle" fill="#ccccdc" textLength="29.5" lengthAdjust="spacingAndGlyphs">21:34</text>
<text x="1023.0" y="732.0" font-size="11.5" text-anchor="middle" fill="#ccccdc" textLength="29.5" lengthAdjust="spacingAndGlyphs">21:36</text>
<text x="1132.2" y="732.0" font-size="11.5" text-anchor="middle" fill="#ccccdc" textLength="29.5" lengthAdjust="spacingAndGlyphs">21:38</text>
<text x="660.7" y="757.0" font-size="12" text-anchor="start" fill="#ccccdc" textLength="28.0" lengthAdjust="spacingAndGlyphs">Used</text>
<text x="700.5" y="757.0" font-size="12" text-anchor="start" fill="#ccccdc" textLength="72.7" lengthAdjust="spacingAndGlyphs">Min: 22.7 GiB</text>
<text x="779.0" y="757.0" font-size="12" text-anchor="start" fill="#ccccdc" textLength="76.0" lengthAdjust="spacingAndGlyphs">Max: 22.9 GiB</text>
<text x="861.1" y="757.0" font-size="12" text-anchor="start" fill="#ccccdc" textLength="72.6" lengthAdjust="spacingAndGlyphs">Avg: 22.8 GiB</text>
<text x="660.7" y="778.0" font-size="12" text-anchor="start" fill="#ccccdc" textLength="41.4" lengthAdjust="spacingAndGlyphs">Cached</text>
<text x="713.9" y="778.0" font-size="12" text-anchor="start" fill="#ccccdc" textLength="72.6" lengthAdjust="spacingAndGlyphs">Min: 39.2 GiB</text>
<text x="792.6" y="778.0" font-size="12" text-anchor="start" fill="#ccccdc" textLength="76.2" lengthAdjust="spacingAndGlyphs">Max: 39.9 GiB</text>
<text x="874.5" y="778.0" font-size="12" text-anchor="start" fill="#ccccdc" textLength="73.0" lengthAdjust="spacingAndGlyphs">Avg: 39.6 GiB</text>
<text x="660.7" y="799.0" font-size="12" text-anchor="start" fill="#ccccdc" textLength="39.8" lengthAdjust="spacingAndGlyphs">Buffers</text>
<text x="712.5" y="799.0" font-size="12" text-anchor="start" fill="#ccccdc" textLength="73.1" lengthAdjust="spacingAndGlyphs">Min: 3.10 GiB</text>
<text x="791.3" y="799.0" font-size="12" text-anchor="start" fill="#ccccdc" textLength="76.1" lengthAdjust="spacingAndGlyphs">Max: 3.10 GiB</text>
<text x="873.1" y="799.0" font-size="12" text-anchor="start" fill="#ccccdc" textLength="73.1" lengthAdjust="spacingAndGlyphs">Avg: 3.10 GiB</text>
<text x="660.7" y="819.0" font-size="12" text-anchor="start" fill="#ccccdc" textLength="24.1" lengthAdjust="spacingAndGlyphs">Free</text>
<text x="696.3" y="819.0" font-size="12" text-anchor="start" fill="#ccccdc" textLength="72.7" lengthAdjust="spacingAndGlyphs">Min: 59.9 GiB</text>
<text x="775.0" y="819.0" font-size="12" text-anchor="start" fill="#ccccdc" textLength="76.0" lengthAdjust="spacingAndGlyphs">Max: 60.7 GiB</text>
<text x="856.9" y="819.0" font-size="12" text-anchor="start" fill="#ccccdc" textLength="73.0" lengthAdjust="spacingAndGlyphs">Avg: 60.3 GiB</text>
<text x="1264.8" y="602.0" font-size="11.5" text-anchor="end" fill="#ccccdc" textLength="28.2" lengthAdjust="spacingAndGlyphs">100%</text>
<text x="1264.8" y="631.0" font-size="11.5" text-anchor="end" fill="#ccccdc" textLength="21.5" lengthAdjust="spacingAndGlyphs">75%</text>
<text x="1264.8" y="660.0" font-size="11.5" text-anchor="end" fill="#ccccdc" textLength="21.5" lengthAdjust="spacingAndGlyphs">50%</text>
<text x="1264.8" y="689.0" font-size="11.5" text-anchor="end" fill="#ccccdc" textLength="21.5" lengthAdjust="spacingAndGlyphs">25%</text>
<text x="1264.8" y="717.0" font-size="11.5" text-anchor="end" fill="#ccccdc" textLength="14.7" lengthAdjust="spacingAndGlyphs">0%</text>
<text x="1292.4" y="732.0" font-size="11.5" text-anchor="middle" fill="#ccccdc" textLength="29.5" lengthAdjust="spacingAndGlyphs">21:30</text>
<text x="1404.4" y="732.0" font-size="11.5" text-anchor="middle" fill="#ccccdc" textLength="29.5" lengthAdjust="spacingAndGlyphs">21:32</text>
<text x="1517.4" y="732.0" font-size="11.5" text-anchor="middle" fill="#ccccdc" textLength="29.5" lengthAdjust="spacingAndGlyphs">21:34</text>
<text x="1629.9" y="732.0" font-size="11.5" text-anchor="middle" fill="#ccccdc" textLength="29.5" lengthAdjust="spacingAndGlyphs">21:36</text>
<text x="1742.4" y="732.0" font-size="11.5" text-anchor="middle" fill="#ccccdc" textLength="29.5" lengthAdjust="spacingAndGlyphs">21:38</text>
<text x="1272.9" y="753.0" font-size="12" text-anchor="start" fill="#ccccdc" textLength="203.2" lengthAdjust="spacingAndGlyphs">netdata.disk_util.sdx.utilization.mean</text>
<text x="1487.5" y="753.0" font-size="12" text-anchor="start" fill="#ccccdc" textLength="63.0" lengthAdjust="spacingAndGlyphs">Max: 65.9%</text>
<text x="1555.9" y="753.0" font-size="12" text-anchor="start" fill="#ccccdc" textLength="60.3" lengthAdjust="spacingAndGlyphs">Avg: 62.4%</text>
<text x="1272.9" y="774.0" font-size="12" text-anchor="start" fill="#ccccdc" textLength="202.1" lengthAdjust="spacingAndGlyphs">netdata.disk_util.sdy.utilization.mean</text>
<text x="1486.7" y="774.0" font-size="12" text-anchor="start" fill="#ccccdc" textLength="63.0" lengthAdjust="spacingAndGlyphs">Max: 67.5%</text>
<text x="1555.1" y="774.0" font-size="12" text-anchor="start" fill="#ccccdc" textLength="60.3" lengthAdjust="spacingAndGlyphs">Avg: 64.7%</text>
<text x="1272.9" y="795.0" font-size="12" text-anchor="start" fill="#ccccdc" textLength="203.2" lengthAdjust="spacingAndGlyphs">netdata.disk_util.sdz.utilization.mean</text>
<text x="1487.5" y="795.0" font-size="12" text-anchor="start" fill="#ccccdc" textLength="63.0" lengthAdjust="spacingAndGlyphs">Max: 64.6%</text>
<text x="1555.9" y="795.0" font-size="12" text-anchor="start" fill="#ccccdc" textLength="60.3" lengthAdjust="spacingAndGlyphs">Avg: 61.8%</text>
<text x="1272.9" y="816.0" font-size="12" text-anchor="start" fill="#ccccdc" textLength="30.8" lengthAdjust="spacingAndGlyphs">Mean</text>
<text x="1315.1" y="816.0" font-size="12" text-anchor="start" fill="#ccccdc" textLength="62.5" lengthAdjust="spacingAndGlyphs">Max: 64.4%</text>
<text x="1383.5" y="816.0" font-size="12" text-anchor="start" fill="#ccccdc" textLength="60.0" lengthAdjust="spacingAndGlyphs">Avg: 63.3%</text>
</g>
</svg></body></html>
